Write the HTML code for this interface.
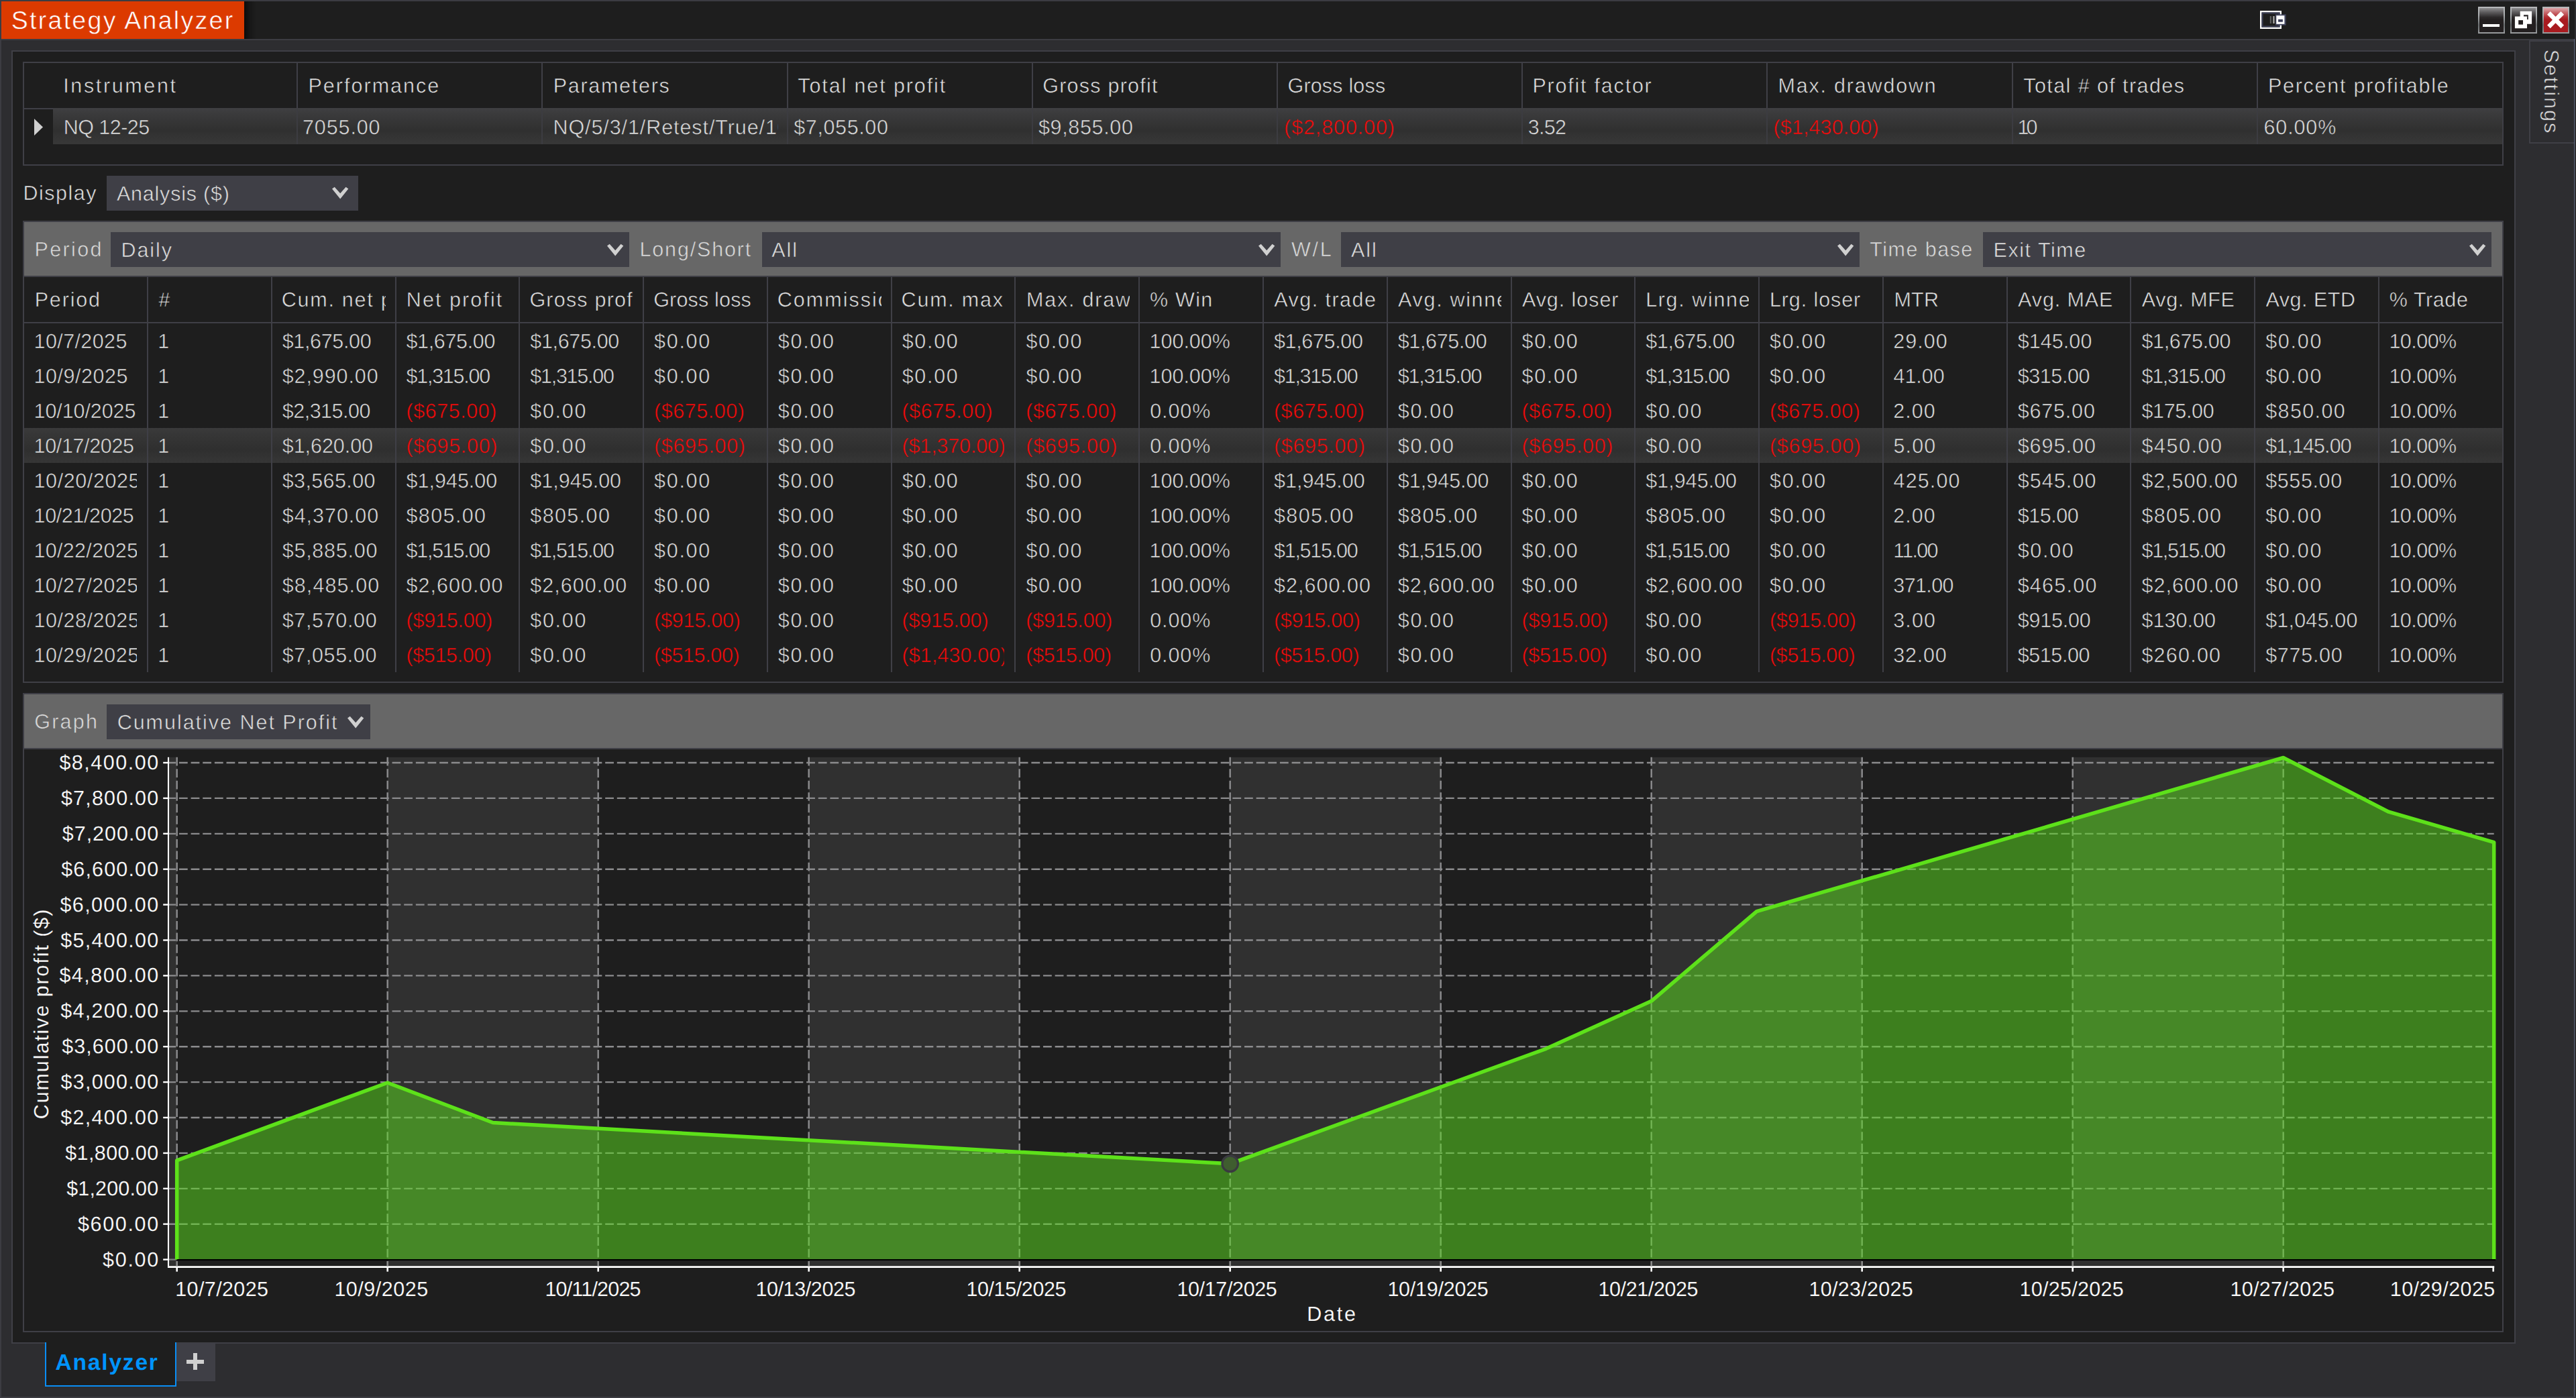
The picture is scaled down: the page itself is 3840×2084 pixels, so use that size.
<!DOCTYPE html>
<html><head><meta charset="utf-8"><title>Strategy Analyzer</title>
<style>
html,body{margin:0;padding:0;overflow:hidden;background:#2d2d30;}
body{width:3840px;height:2084px;overflow:hidden;background:#2d2d30;font-family:"Liberation Sans",sans-serif;position:relative;}
body div,body svg{position:absolute;}
.t{white-space:nowrap;text-rendering:geometricPrecision;}
</style></head><body>
<div style="left:0px;top:0px;width:3840px;height:2084px;background:#3c3c42;"></div>
<div style="left:2px;top:2px;width:3836px;height:56px;background:#1e1e1e;"></div>
<div style="left:2px;top:58px;width:3836px;height:2px;background:#3c3c42;"></div>
<div style="left:2px;top:60px;width:3836px;height:2022px;background:#2d2d30;"></div>
<div style="left:2px;top:2px;width:362px;height:56px;background:#dc3a00;"></div>
<div class="t" style="left:16.80px;top:12px;font-size:37.5px;line-height:37.5px;color:#ffffff;letter-spacing:2.276px;-webkit-text-stroke:0.55px #dc3a00;">Strategy Analyzer</div>
<div style="left:3694px;top:10px;width:40px;height:40px;background:linear-gradient(#b6b8ba 0%,#abaeb0 30%,#8f9395 50%,#6c7072 68%,#7f8284 85%,#9c9ea0 100%);"><div style="left:2px;top:2px;width:36px;height:36px;background:linear-gradient(#8d8d8f 0%,#5c5a5c 18%,#2c292a 38%,#231f20 48%,#231f20 100%);"></div></div>
<div style="left:3742px;top:10px;width:40px;height:40px;background:linear-gradient(#b6b8ba 0%,#abaeb0 30%,#8f9395 50%,#6c7072 68%,#7f8284 85%,#9c9ea0 100%);"><div style="left:2px;top:2px;width:36px;height:36px;background:linear-gradient(#8d8d8f 0%,#5c5a5c 18%,#2c292a 38%,#231f20 48%,#231f20 100%);"></div></div>
<div style="left:3790px;top:10px;width:40px;height:40px;background:linear-gradient(#b6b8ba 0%,#abaeb0 30%,#8f9395 50%,#6c7072 68%,#7f8284 85%,#9c9ea0 100%);"><div style="left:2px;top:2px;width:36px;height:36px;background:linear-gradient(#dca7aa 0%,#c9696d 18%,#b12c31 38%,#a91b20 48%,#a91b20 100%);"></div></div>
<div style="left:3701px;top:36px;width:25px;height:4.2px;background:#ffffff;"></div>
<svg style="left:3742px;top:10px" width="40" height="40" viewBox="0 0 40 40"><path d="M14.7,6.8 H32.1 V25.7 H14.7 Z M20,12 V19 H26.8 V12 Z" fill="#fff" fill-rule="evenodd"/><path d="M6.9,14.5 H25 V32.2 H6.9 Z" fill="#fff"/><rect x="12.2" y="20.1" width="6.8" height="6.5" fill="#231f20"/></svg>
<svg style="left:3790px;top:10px" width="40" height="40" viewBox="0 0 40 40"><path d="M9.4,9.4 L29.8,29.8 M29.8,9.4 L9.4,29.8" stroke="#fff" stroke-width="6.6" fill="none"/></svg>
<svg style="left:3350px;top:5px" width="80" height="50" viewBox="0 0 80 50"><rect x="20.2" y="12.2" width="29.6" height="24.6" fill="#1e1e1e" stroke="#fff" stroke-width="2.4"/><rect x="22.5" y="14.5" width="25" height="20" fill="none" stroke="#3d4058" stroke-width="2"/><rect x="33.8" y="19" width="2.2" height="11" fill="#5c5e5e"/><rect x="38.3" y="19" width="2.3" height="11" fill="#a8a8a8"/><rect x="42" y="16.4" width="15.6" height="16.2" fill="#454862"/><rect x="43.3" y="18.2" width="12.1" height="12.6" fill="#fff"/><rect x="46.1" y="23.8" width="6.8" height="3.9" fill="#3a3d58"/></svg>
<div style="left:364px;top:2px;width:18px;height:56px;background:linear-gradient(90deg,rgba(0,0,0,0.62),rgba(0,0,0,0.25) 45%,rgba(0,0,0,0));"></div>
<div style="left:3770px;top:60px;width:68px;height:154px;background:#3f3f46;"></div>
<div style="left:3772px;top:62px;width:66px;height:150px;background:#2d2d30;"></div>
<div class="t" style="left:3772px;top:62px;width:66px;height:150px;"><div class="t" style="left:30.7px;top:75.3px;transform:translate(-50%,-50%) rotate(90deg);font-size:30.6px;line-height:30.6px;color:#dcdcdc;letter-spacing:2.05px;-webkit-text-stroke:0.55px #2d2d30;">Settings</div></div>
<div style="left:17px;top:75px;width:3733px;height:1928px;background:#3f3f46;"></div>
<div style="left:19px;top:77px;width:3729px;height:1924px;background:#1e1e1e;"></div>
<div style="left:34px;top:92px;width:3698px;height:155px;background:#3f3f46;"></div>
<div style="left:36px;top:94px;width:3694px;height:151px;background:#1e1e1e;"></div>
<div style="left:36px;top:161px;width:3694px;height:2px;background:#3f3f46;"></div>
<div style="left:79px;top:161px;width:3651px;height:54px;background:linear-gradient(#3f3f42 0%,#3a3a3b 18%,#303030 62%,#383838 100%);"></div>
<div style="left:442px;top:94px;width:2px;height:68px;background:#3f3f46;"></div>
<div style="left:442px;top:163px;width:2px;height:52px;background:#3c3c41;"></div>
<div style="left:807px;top:94px;width:2px;height:68px;background:#3f3f46;"></div>
<div style="left:807px;top:163px;width:2px;height:52px;background:#3c3c41;"></div>
<div style="left:1173px;top:94px;width:2px;height:68px;background:#3f3f46;"></div>
<div style="left:1173px;top:163px;width:2px;height:52px;background:#3c3c41;"></div>
<div style="left:1538px;top:94px;width:2px;height:68px;background:#3f3f46;"></div>
<div style="left:1538px;top:163px;width:2px;height:52px;background:#3c3c41;"></div>
<div style="left:1903px;top:94px;width:2px;height:68px;background:#3f3f46;"></div>
<div style="left:1903px;top:163px;width:2px;height:52px;background:#3c3c41;"></div>
<div style="left:2268px;top:94px;width:2px;height:68px;background:#3f3f46;"></div>
<div style="left:2268px;top:163px;width:2px;height:52px;background:#3c3c41;"></div>
<div style="left:2633px;top:94px;width:2px;height:68px;background:#3f3f46;"></div>
<div style="left:2633px;top:163px;width:2px;height:52px;background:#3c3c41;"></div>
<div style="left:2999px;top:94px;width:2px;height:68px;background:#3f3f46;"></div>
<div style="left:2999px;top:163px;width:2px;height:52px;background:#3c3c41;"></div>
<div style="left:3364px;top:94px;width:2px;height:68px;background:#3f3f46;"></div>
<div style="left:3364px;top:163px;width:2px;height:52px;background:#3c3c41;"></div>
<svg style="left:50px;top:176px" width="16" height="28" viewBox="0 0 16 28"><path d="M1,1 L14,13.5 L1,26 Z" fill="#d0d0d0"/></svg>
<div class="t" style="left:94.19px;top:113px;font-size:30.5px;line-height:30.5px;color:#dedede;letter-spacing:2.640px;-webkit-text-stroke:0.55px #1e1e1e;">Instrument</div>
<div class="t" style="left:459.50px;top:113px;font-size:30.5px;line-height:30.5px;color:#dedede;letter-spacing:2.014px;-webkit-text-stroke:0.55px #1e1e1e;">Performance</div>
<div class="t" style="left:824.70px;top:113px;font-size:30.5px;line-height:30.5px;color:#dedede;letter-spacing:1.716px;-webkit-text-stroke:0.55px #1e1e1e;">Parameters</div>
<div class="t" style="left:1189.31px;top:113px;font-size:30.5px;line-height:30.5px;color:#dedede;letter-spacing:1.886px;-webkit-text-stroke:0.55px #1e1e1e;">Total net profit</div>
<div class="t" style="left:1554.27px;top:113px;font-size:30.5px;line-height:30.5px;color:#dedede;letter-spacing:1.226px;-webkit-text-stroke:0.55px #1e1e1e;">Gross profit</div>
<div class="t" style="left:1919.47px;top:113px;font-size:30.5px;line-height:30.5px;color:#dedede;letter-spacing:0.184px;-webkit-text-stroke:0.55px #1e1e1e;">Gross loss</div>
<div class="t" style="left:2284.50px;top:113px;font-size:30.5px;line-height:30.5px;color:#dedede;letter-spacing:1.778px;-webkit-text-stroke:0.55px #1e1e1e;">Profit factor</div>
<div class="t" style="left:2650.50px;top:113px;font-size:30.5px;line-height:30.5px;color:#dedede;letter-spacing:1.806px;-webkit-text-stroke:0.55px #1e1e1e;">Max. drawdown</div>
<div class="t" style="left:3016.31px;top:113px;font-size:30.5px;line-height:30.5px;color:#dedede;letter-spacing:1.415px;-webkit-text-stroke:0.55px #1e1e1e;">Total # of trades</div>
<div class="t" style="left:3380.90px;top:113px;font-size:30.5px;line-height:30.5px;color:#dedede;letter-spacing:1.745px;-webkit-text-stroke:0.55px #1e1e1e;">Percent profitable</div>
<div class="t" style="left:94.80px;top:175px;font-size:30.5px;line-height:30.5px;color:#dcdcdc;letter-spacing:-0.557px;-webkit-text-stroke:0.55px #363637;">NQ 12-25</div>
<div class="t" style="left:450.94px;top:175px;font-size:30.5px;line-height:30.5px;color:#dcdcdc;letter-spacing:0.897px;-webkit-text-stroke:0.55px #363637;">7055.00</div>
<div class="t" style="left:824.50px;top:175px;font-size:30.5px;line-height:30.5px;color:#dcdcdc;letter-spacing:0.914px;-webkit-text-stroke:0.55px #363637;width:335.10px;overflow:hidden;">NQ/5/3/1/Retest/True/10</div>
<div class="t" style="left:1183.27px;top:175px;font-size:30.5px;line-height:30.5px;color:#dcdcdc;letter-spacing:0.621px;-webkit-text-stroke:0.55px #363637;">$7,055.00</div>
<div class="t" style="left:1547.97px;top:175px;font-size:30.5px;line-height:30.5px;color:#dcdcdc;letter-spacing:0.661px;-webkit-text-stroke:0.55px #363637;">$9,855.00</div>
<div class="t" style="left:1914.11px;top:175px;font-size:30.5px;line-height:30.5px;color:#f40a0a;letter-spacing:0.882px;-webkit-text-stroke:0.55px #363637;">($2,800.00)</div>
<div class="t" style="left:2277.64px;top:175px;font-size:30.5px;line-height:30.5px;color:#dcdcdc;letter-spacing:-0.692px;-webkit-text-stroke:0.55px #363637;">3.52</div>
<div class="t" style="left:2643.61px;top:175px;font-size:30.5px;line-height:30.5px;color:#f40a0a;letter-spacing:0.096px;-webkit-text-stroke:0.55px #363637;">($1,430.00)</div>
<div class="t" style="left:3007.38px;top:175px;font-size:30.5px;line-height:30.5px;color:#dcdcdc;letter-spacing:-3.877px;-webkit-text-stroke:0.55px #363637;">10</div>
<div class="t" style="left:3374.45px;top:175px;font-size:30.5px;line-height:30.5px;color:#dcdcdc;letter-spacing:0.882px;-webkit-text-stroke:0.55px #363637;">60.00%</div>
<div class="t" style="left:34.50px;top:273px;font-size:30.5px;line-height:30.5px;color:#dedede;letter-spacing:1.509px;-webkit-text-stroke:0.55px #1e1e1e;">Display</div>
<div style="left:159px;top:262px;width:375px;height:52px;background:#3f3f46;"></div>
<div class="t" style="left:173.94px;top:274px;font-size:30.5px;line-height:30.5px;color:#dedede;letter-spacing:0.784px;-webkit-text-stroke:0.55px #3f3f46;">Analysis ($)</div>
<svg style="left:494.8px;top:277.8px" width="25" height="19" viewBox="0 0 25 19"><polygon points="0,3.6 3.7,0.7 12.2,10.2 20.6,0.7 24.3,3.6 12.2,18.4" fill="#d0d0d0"/></svg>
<div style="left:34px;top:329px;width:3698px;height:84px;background:#3f3f46;"></div>
<div style="left:36px;top:331px;width:3694px;height:80px;background:#676767;"></div>
<div class="t" style="left:51.50px;top:357px;font-size:30.5px;line-height:30.5px;color:#dadada;letter-spacing:2.380px;-webkit-text-stroke:0.55px #676767;">Period</div>
<div style="left:165px;top:346px;width:773px;height:52px;background:#3f3f46;"></div>
<svg style="left:905px;top:363px" width="25" height="19" viewBox="0 0 25 19"><polygon points="0,3.6 3.7,0.7 12.2,10.2 20.6,0.7 24.3,3.6 12.2,18.4" fill="#d0d0d0"/></svg>
<div class="t" style="left:180.50px;top:358px;font-size:30.5px;line-height:30.5px;color:#dedede;letter-spacing:1.917px;-webkit-text-stroke:0.55px #3f3f46;">Daily</div>
<div class="t" style="left:953.50px;top:357px;font-size:30.5px;line-height:30.5px;color:#dadada;letter-spacing:1.833px;-webkit-text-stroke:0.55px #676767;">Long/Short</div>
<div style="left:1136px;top:346px;width:773px;height:52px;background:#3f3f46;"></div>
<svg style="left:1876px;top:363px" width="25" height="19" viewBox="0 0 25 19"><polygon points="0,3.6 3.7,0.7 12.2,10.2 20.6,0.7 24.3,3.6 12.2,18.4" fill="#d0d0d0"/></svg>
<div class="t" style="left:1150.24px;top:358px;font-size:30.5px;line-height:30.5px;color:#dedede;letter-spacing:2.003px;-webkit-text-stroke:0.55px #3f3f46;">All</div>
<div class="t" style="left:1925.07px;top:357px;font-size:30.5px;line-height:30.5px;color:#dadada;letter-spacing:2.662px;-webkit-text-stroke:0.55px #676767;">W/L</div>
<div style="left:1999px;top:346px;width:773px;height:52px;background:#3f3f46;"></div>
<svg style="left:2739px;top:363px" width="25" height="19" viewBox="0 0 25 19"><polygon points="0,3.6 3.7,0.7 12.2,10.2 20.6,0.7 24.3,3.6 12.2,18.4" fill="#d0d0d0"/></svg>
<div class="t" style="left:2013.94px;top:358px;font-size:30.5px;line-height:30.5px;color:#dedede;letter-spacing:2.003px;-webkit-text-stroke:0.55px #3f3f46;">All</div>
<div class="t" style="left:2787.31px;top:357px;font-size:30.5px;line-height:30.5px;color:#dadada;letter-spacing:1.473px;-webkit-text-stroke:0.55px #676767;">Time base</div>
<div style="left:2956px;top:346px;width:758px;height:52px;background:#3f3f46;"></div>
<svg style="left:3681px;top:363px" width="25" height="19" viewBox="0 0 25 19"><polygon points="0,3.6 3.7,0.7 12.2,10.2 20.6,0.7 24.3,3.6 12.2,18.4" fill="#d0d0d0"/></svg>
<div class="t" style="left:2971.50px;top:358px;font-size:30.5px;line-height:30.5px;color:#dedede;letter-spacing:1.540px;-webkit-text-stroke:0.55px #3f3f46;">Exit Time</div>
<div style="left:34px;top:411px;width:3698px;height:607px;background:#3f3f46;"></div>
<div style="left:36px;top:413px;width:3694px;height:603px;background:#1e1e1e;"></div>
<div style="left:36px;top:480px;width:3694px;height:2px;background:#3f3f46;"></div>
<div style="left:36px;top:638.0px;width:3694px;height:52.0px;background:linear-gradient(#3a3a3b 0%,#363636 20%,#2f2f2f 62%,#363636 100%);"></div>
<div style="left:219px;top:413px;width:2px;height:589px;background:#3f3f46;"></div>
<div style="left:404px;top:413px;width:2px;height:589px;background:#3f3f46;"></div>
<div style="left:589px;top:413px;width:2px;height:589px;background:#3f3f46;"></div>
<div style="left:773px;top:413px;width:2px;height:589px;background:#3f3f46;"></div>
<div style="left:958px;top:413px;width:2px;height:589px;background:#3f3f46;"></div>
<div style="left:1143px;top:413px;width:2px;height:589px;background:#3f3f46;"></div>
<div style="left:1328px;top:413px;width:2px;height:589px;background:#3f3f46;"></div>
<div style="left:1512px;top:413px;width:2px;height:589px;background:#3f3f46;"></div>
<div style="left:1697px;top:413px;width:2px;height:589px;background:#3f3f46;"></div>
<div style="left:1882px;top:413px;width:2px;height:589px;background:#3f3f46;"></div>
<div style="left:2067px;top:413px;width:2px;height:589px;background:#3f3f46;"></div>
<div style="left:2252px;top:413px;width:2px;height:589px;background:#3f3f46;"></div>
<div style="left:2436px;top:413px;width:2px;height:589px;background:#3f3f46;"></div>
<div style="left:2621px;top:413px;width:2px;height:589px;background:#3f3f46;"></div>
<div style="left:2806px;top:413px;width:2px;height:589px;background:#3f3f46;"></div>
<div style="left:2991px;top:413px;width:2px;height:589px;background:#3f3f46;"></div>
<div style="left:3175px;top:413px;width:2px;height:589px;background:#3f3f46;"></div>
<div style="left:3360px;top:413px;width:2px;height:589px;background:#3f3f46;"></div>
<div style="left:3545px;top:413px;width:2px;height:589px;background:#3f3f46;"></div>
<div class="t" style="left:51.70px;top:432px;font-size:30.5px;line-height:30.5px;color:#dedede;letter-spacing:1.829px;-webkit-text-stroke:0.55px #1e1e1e;width:153.58px;overflow:hidden;">Period</div>
<div class="t" style="left:236.45px;top:432px;font-size:30.5px;line-height:30.5px;color:#dedede;letter-spacing:0.000px;-webkit-text-stroke:0.55px #1e1e1e;width:153.61px;overflow:hidden;">#</div>
<div class="t" style="left:419.71px;top:432px;font-size:30.5px;line-height:30.5px;color:#dedede;letter-spacing:1.760px;-webkit-text-stroke:0.55px #1e1e1e;width:155.13px;overflow:hidden;">Cum. net profit</div>
<div class="t" style="left:605.84px;top:432px;font-size:30.5px;line-height:30.5px;color:#dedede;letter-spacing:2.070px;-webkit-text-stroke:0.55px #1e1e1e;width:153.78px;overflow:hidden;">Net profit</div>
<div class="t" style="left:789.39px;top:432px;font-size:30.5px;line-height:30.5px;color:#dedede;letter-spacing:1.226px;-webkit-text-stroke:0.55px #1e1e1e;width:155.01px;overflow:hidden;">Gross profit</div>
<div class="t" style="left:974.17px;top:432px;font-size:30.5px;line-height:30.5px;color:#dedede;letter-spacing:0.184px;-webkit-text-stroke:0.55px #1e1e1e;width:155.01px;overflow:hidden;">Gross loss</div>
<div class="t" style="left:1158.83px;top:432px;font-size:30.5px;line-height:30.5px;color:#dedede;letter-spacing:2.007px;-webkit-text-stroke:0.55px #1e1e1e;width:155.13px;overflow:hidden;">Commission</div>
<div class="t" style="left:1343.61px;top:432px;font-size:30.5px;line-height:30.5px;color:#dedede;letter-spacing:1.766px;-webkit-text-stroke:0.55px #1e1e1e;width:155.13px;overflow:hidden;">Cum. max. drawdown</div>
<div class="t" style="left:1529.94px;top:432px;font-size:30.5px;line-height:30.5px;color:#dedede;letter-spacing:1.806px;-webkit-text-stroke:0.55px #1e1e1e;width:153.58px;overflow:hidden;">Max. drawdown</div>
<div class="t" style="left:1713.93px;top:432px;font-size:30.5px;line-height:30.5px;color:#dedede;letter-spacing:1.302px;-webkit-text-stroke:0.55px #1e1e1e;width:154.37px;overflow:hidden;">% Win</div>
<div class="t" style="left:1899.34px;top:432px;font-size:30.5px;line-height:30.5px;color:#dedede;letter-spacing:1.450px;-webkit-text-stroke:0.55px #1e1e1e;width:153.74px;overflow:hidden;">Avg. trade</div>
<div class="t" style="left:2084.12px;top:432px;font-size:30.5px;line-height:30.5px;color:#dedede;letter-spacing:1.678px;-webkit-text-stroke:0.55px #1e1e1e;width:153.74px;overflow:hidden;">Avg. winner</div>
<div class="t" style="left:2268.90px;top:432px;font-size:30.5px;line-height:30.5px;color:#dedede;letter-spacing:0.946px;-webkit-text-stroke:0.55px #1e1e1e;width:153.74px;overflow:hidden;">Avg. loser</div>
<div class="t" style="left:2453.14px;top:432px;font-size:30.5px;line-height:30.5px;color:#dedede;letter-spacing:1.644px;-webkit-text-stroke:0.55px #1e1e1e;width:154.28px;overflow:hidden;">Lrg. winner</div>
<div class="t" style="left:2637.92px;top:432px;font-size:30.5px;line-height:30.5px;color:#dedede;letter-spacing:0.907px;-webkit-text-stroke:0.55px #1e1e1e;width:154.28px;overflow:hidden;">Lrg. loser</div>
<div class="t" style="left:2823.40px;top:432px;font-size:30.5px;line-height:30.5px;color:#dedede;letter-spacing:0.288px;-webkit-text-stroke:0.55px #1e1e1e;width:153.58px;overflow:hidden;">MTR</div>
<div class="t" style="left:3008.02px;top:432px;font-size:30.5px;line-height:30.5px;color:#dedede;letter-spacing:0.912px;-webkit-text-stroke:0.55px #1e1e1e;width:153.74px;overflow:hidden;">Avg. MAE</div>
<div class="t" style="left:3192.80px;top:432px;font-size:30.5px;line-height:30.5px;color:#dedede;letter-spacing:0.689px;-webkit-text-stroke:0.55px #1e1e1e;width:153.74px;overflow:hidden;">Avg. MFE</div>
<div class="t" style="left:3377.58px;top:432px;font-size:30.5px;line-height:30.5px;color:#dedede;letter-spacing:0.484px;-webkit-text-stroke:0.55px #1e1e1e;width:153.74px;overflow:hidden;">Avg. ETD</div>
<div class="t" style="left:3561.73px;top:432px;font-size:30.5px;line-height:30.5px;color:#dedede;letter-spacing:0.590px;-webkit-text-stroke:0.55px #1e1e1e;width:154.37px;overflow:hidden;">% Trade</div>
<div class="t" style="left:50.58px;top:494px;font-size:30.5px;line-height:30.5px;color:#dcdcdc;letter-spacing:0.385px;-webkit-text-stroke:0.55px #1e1e1e;width:153.40px;overflow:hidden;">10/7/2025</div>
<div class="t" style="left:235.36px;top:494px;font-size:30.5px;line-height:30.5px;color:#dcdcdc;letter-spacing:0.000px;-webkit-text-stroke:0.55px #1e1e1e;width:153.40px;overflow:hidden;">1</div>
<div class="t" style="left:420.73px;top:494px;font-size:30.5px;line-height:30.5px;color:#dcdcdc;letter-spacing:-0.344px;-webkit-text-stroke:0.55px #1e1e1e;width:152.81px;overflow:hidden;">$1,675.00</div>
<div class="t" style="left:605.51px;top:494px;font-size:30.5px;line-height:30.5px;color:#dcdcdc;letter-spacing:-0.344px;-webkit-text-stroke:0.55px #1e1e1e;width:152.81px;overflow:hidden;">$1,675.00</div>
<div class="t" style="left:790.29px;top:494px;font-size:30.5px;line-height:30.5px;color:#dcdcdc;letter-spacing:-0.344px;-webkit-text-stroke:0.55px #1e1e1e;width:152.81px;overflow:hidden;">$1,675.00</div>
<div class="t" style="left:975.07px;top:494px;font-size:30.5px;line-height:30.5px;color:#dcdcdc;letter-spacing:1.705px;-webkit-text-stroke:0.55px #1e1e1e;width:152.81px;overflow:hidden;">$0.00</div>
<div class="t" style="left:1159.85px;top:494px;font-size:30.5px;line-height:30.5px;color:#dcdcdc;letter-spacing:1.705px;-webkit-text-stroke:0.55px #1e1e1e;width:152.81px;overflow:hidden;">$0.00</div>
<div class="t" style="left:1344.63px;top:494px;font-size:30.5px;line-height:30.5px;color:#dcdcdc;letter-spacing:1.705px;-webkit-text-stroke:0.55px #1e1e1e;width:152.81px;overflow:hidden;">$0.00</div>
<div class="t" style="left:1529.41px;top:494px;font-size:30.5px;line-height:30.5px;color:#dcdcdc;letter-spacing:1.705px;-webkit-text-stroke:0.55px #1e1e1e;width:152.81px;overflow:hidden;">$0.00</div>
<div class="t" style="left:1713.60px;top:494px;font-size:30.5px;line-height:30.5px;color:#dcdcdc;letter-spacing:-0.035px;-webkit-text-stroke:0.55px #1e1e1e;width:153.40px;overflow:hidden;">100.00%</div>
<div class="t" style="left:1898.97px;top:494px;font-size:30.5px;line-height:30.5px;color:#dcdcdc;letter-spacing:-0.344px;-webkit-text-stroke:0.55px #1e1e1e;width:152.81px;overflow:hidden;">$1,675.00</div>
<div class="t" style="left:2083.75px;top:494px;font-size:30.5px;line-height:30.5px;color:#dcdcdc;letter-spacing:-0.344px;-webkit-text-stroke:0.55px #1e1e1e;width:152.81px;overflow:hidden;">$1,675.00</div>
<div class="t" style="left:2268.53px;top:494px;font-size:30.5px;line-height:30.5px;color:#dcdcdc;letter-spacing:1.705px;-webkit-text-stroke:0.55px #1e1e1e;width:152.81px;overflow:hidden;">$0.00</div>
<div class="t" style="left:2453.31px;top:494px;font-size:30.5px;line-height:30.5px;color:#dcdcdc;letter-spacing:-0.344px;-webkit-text-stroke:0.55px #1e1e1e;width:152.81px;overflow:hidden;">$1,675.00</div>
<div class="t" style="left:2638.09px;top:494px;font-size:30.5px;line-height:30.5px;color:#dcdcdc;letter-spacing:1.705px;-webkit-text-stroke:0.55px #1e1e1e;width:152.81px;overflow:hidden;">$0.00</div>
<div class="t" style="left:2822.17px;top:494px;font-size:30.5px;line-height:30.5px;color:#dcdcdc;letter-spacing:1.059px;-webkit-text-stroke:0.55px #1e1e1e;width:153.51px;overflow:hidden;">29.00</div>
<div class="t" style="left:3007.65px;top:494px;font-size:30.5px;line-height:30.5px;color:#dcdcdc;letter-spacing:0.079px;-webkit-text-stroke:0.55px #1e1e1e;width:152.81px;overflow:hidden;">$145.00</div>
<div class="t" style="left:3192.43px;top:494px;font-size:30.5px;line-height:30.5px;color:#dcdcdc;letter-spacing:-0.344px;-webkit-text-stroke:0.55px #1e1e1e;width:152.81px;overflow:hidden;">$1,675.00</div>
<div class="t" style="left:3377.21px;top:494px;font-size:30.5px;line-height:30.5px;color:#dcdcdc;letter-spacing:1.705px;-webkit-text-stroke:0.55px #1e1e1e;width:152.81px;overflow:hidden;">$0.00</div>
<div class="t" style="left:3561.40px;top:494px;font-size:30.5px;line-height:30.5px;color:#dcdcdc;letter-spacing:-0.524px;-webkit-text-stroke:0.55px #1e1e1e;width:153.40px;overflow:hidden;">10.00%</div>
<div class="t" style="left:50.58px;top:546px;font-size:30.5px;line-height:30.5px;color:#dcdcdc;letter-spacing:0.510px;-webkit-text-stroke:0.55px #1e1e1e;width:153.40px;overflow:hidden;">10/9/2025</div>
<div class="t" style="left:235.36px;top:546px;font-size:30.5px;line-height:30.5px;color:#dcdcdc;letter-spacing:0.000px;-webkit-text-stroke:0.55px #1e1e1e;width:153.40px;overflow:hidden;">1</div>
<div class="t" style="left:420.73px;top:546px;font-size:30.5px;line-height:30.5px;color:#dcdcdc;letter-spacing:0.908px;-webkit-text-stroke:0.55px #1e1e1e;width:152.81px;overflow:hidden;">$2,990.00</div>
<div class="t" style="left:605.51px;top:546px;font-size:30.5px;line-height:30.5px;color:#dcdcdc;letter-spacing:-1.255px;-webkit-text-stroke:0.55px #1e1e1e;width:152.81px;overflow:hidden;">$1,315.00</div>
<div class="t" style="left:790.29px;top:546px;font-size:30.5px;line-height:30.5px;color:#dcdcdc;letter-spacing:-1.255px;-webkit-text-stroke:0.55px #1e1e1e;width:152.81px;overflow:hidden;">$1,315.00</div>
<div class="t" style="left:975.07px;top:546px;font-size:30.5px;line-height:30.5px;color:#dcdcdc;letter-spacing:1.705px;-webkit-text-stroke:0.55px #1e1e1e;width:152.81px;overflow:hidden;">$0.00</div>
<div class="t" style="left:1159.85px;top:546px;font-size:30.5px;line-height:30.5px;color:#dcdcdc;letter-spacing:1.705px;-webkit-text-stroke:0.55px #1e1e1e;width:152.81px;overflow:hidden;">$0.00</div>
<div class="t" style="left:1344.63px;top:546px;font-size:30.5px;line-height:30.5px;color:#dcdcdc;letter-spacing:1.705px;-webkit-text-stroke:0.55px #1e1e1e;width:152.81px;overflow:hidden;">$0.00</div>
<div class="t" style="left:1529.41px;top:546px;font-size:30.5px;line-height:30.5px;color:#dcdcdc;letter-spacing:1.705px;-webkit-text-stroke:0.55px #1e1e1e;width:152.81px;overflow:hidden;">$0.00</div>
<div class="t" style="left:1713.60px;top:546px;font-size:30.5px;line-height:30.5px;color:#dcdcdc;letter-spacing:-0.035px;-webkit-text-stroke:0.55px #1e1e1e;width:153.40px;overflow:hidden;">100.00%</div>
<div class="t" style="left:1898.97px;top:546px;font-size:30.5px;line-height:30.5px;color:#dcdcdc;letter-spacing:-1.255px;-webkit-text-stroke:0.55px #1e1e1e;width:152.81px;overflow:hidden;">$1,315.00</div>
<div class="t" style="left:2083.75px;top:546px;font-size:30.5px;line-height:30.5px;color:#dcdcdc;letter-spacing:-1.255px;-webkit-text-stroke:0.55px #1e1e1e;width:152.81px;overflow:hidden;">$1,315.00</div>
<div class="t" style="left:2268.53px;top:546px;font-size:30.5px;line-height:30.5px;color:#dcdcdc;letter-spacing:1.705px;-webkit-text-stroke:0.55px #1e1e1e;width:152.81px;overflow:hidden;">$0.00</div>
<div class="t" style="left:2453.31px;top:546px;font-size:30.5px;line-height:30.5px;color:#dcdcdc;letter-spacing:-1.255px;-webkit-text-stroke:0.55px #1e1e1e;width:152.81px;overflow:hidden;">$1,315.00</div>
<div class="t" style="left:2638.09px;top:546px;font-size:30.5px;line-height:30.5px;color:#dcdcdc;letter-spacing:1.705px;-webkit-text-stroke:0.55px #1e1e1e;width:152.81px;overflow:hidden;">$0.00</div>
<div class="t" style="left:2822.60px;top:546px;font-size:30.5px;line-height:30.5px;color:#dcdcdc;letter-spacing:-0.075px;-webkit-text-stroke:0.55px #1e1e1e;width:153.08px;overflow:hidden;">41.00</div>
<div class="t" style="left:3007.65px;top:546px;font-size:30.5px;line-height:30.5px;color:#dcdcdc;letter-spacing:-0.390px;-webkit-text-stroke:0.55px #1e1e1e;width:152.81px;overflow:hidden;">$315.00</div>
<div class="t" style="left:3192.43px;top:546px;font-size:30.5px;line-height:30.5px;color:#dcdcdc;letter-spacing:-1.255px;-webkit-text-stroke:0.55px #1e1e1e;width:152.81px;overflow:hidden;">$1,315.00</div>
<div class="t" style="left:3377.21px;top:546px;font-size:30.5px;line-height:30.5px;color:#dcdcdc;letter-spacing:1.705px;-webkit-text-stroke:0.55px #1e1e1e;width:152.81px;overflow:hidden;">$0.00</div>
<div class="t" style="left:3561.40px;top:546px;font-size:30.5px;line-height:30.5px;color:#dcdcdc;letter-spacing:-0.524px;-webkit-text-stroke:0.55px #1e1e1e;width:153.40px;overflow:hidden;">10.00%</div>
<div class="t" style="left:50.58px;top:598px;font-size:30.5px;line-height:30.5px;color:#dcdcdc;letter-spacing:-0.092px;-webkit-text-stroke:0.55px #1e1e1e;width:153.40px;overflow:hidden;">10/10/2025</div>
<div class="t" style="left:235.36px;top:598px;font-size:30.5px;line-height:30.5px;color:#dcdcdc;letter-spacing:0.000px;-webkit-text-stroke:0.55px #1e1e1e;width:153.40px;overflow:hidden;">1</div>
<div class="t" style="left:420.73px;top:598px;font-size:30.5px;line-height:30.5px;color:#dcdcdc;letter-spacing:-0.494px;-webkit-text-stroke:0.55px #1e1e1e;width:152.81px;overflow:hidden;">$2,315.00</div>
<div class="t" style="left:605.45px;top:598px;font-size:30.5px;line-height:30.5px;color:#f40a0a;letter-spacing:0.555px;-webkit-text-stroke:0.55px #1e1e1e;width:152.87px;overflow:hidden;">($675.00)</div>
<div class="t" style="left:790.29px;top:598px;font-size:30.5px;line-height:30.5px;color:#dcdcdc;letter-spacing:1.705px;-webkit-text-stroke:0.55px #1e1e1e;width:152.81px;overflow:hidden;">$0.00</div>
<div class="t" style="left:975.01px;top:598px;font-size:30.5px;line-height:30.5px;color:#f40a0a;letter-spacing:0.555px;-webkit-text-stroke:0.55px #1e1e1e;width:152.87px;overflow:hidden;">($675.00)</div>
<div class="t" style="left:1159.85px;top:598px;font-size:30.5px;line-height:30.5px;color:#dcdcdc;letter-spacing:1.705px;-webkit-text-stroke:0.55px #1e1e1e;width:152.81px;overflow:hidden;">$0.00</div>
<div class="t" style="left:1344.57px;top:598px;font-size:30.5px;line-height:30.5px;color:#f40a0a;letter-spacing:0.555px;-webkit-text-stroke:0.55px #1e1e1e;width:152.87px;overflow:hidden;">($675.00)</div>
<div class="t" style="left:1529.35px;top:598px;font-size:30.5px;line-height:30.5px;color:#f40a0a;letter-spacing:0.555px;-webkit-text-stroke:0.55px #1e1e1e;width:152.87px;overflow:hidden;">($675.00)</div>
<div class="t" style="left:1714.23px;top:598px;font-size:30.5px;line-height:30.5px;color:#dcdcdc;letter-spacing:0.916px;-webkit-text-stroke:0.55px #1e1e1e;width:152.77px;overflow:hidden;">0.00%</div>
<div class="t" style="left:1898.91px;top:598px;font-size:30.5px;line-height:30.5px;color:#f40a0a;letter-spacing:0.555px;-webkit-text-stroke:0.55px #1e1e1e;width:152.87px;overflow:hidden;">($675.00)</div>
<div class="t" style="left:2083.75px;top:598px;font-size:30.5px;line-height:30.5px;color:#dcdcdc;letter-spacing:1.705px;-webkit-text-stroke:0.55px #1e1e1e;width:152.81px;overflow:hidden;">$0.00</div>
<div class="t" style="left:2268.47px;top:598px;font-size:30.5px;line-height:30.5px;color:#f40a0a;letter-spacing:0.555px;-webkit-text-stroke:0.55px #1e1e1e;width:152.87px;overflow:hidden;">($675.00)</div>
<div class="t" style="left:2453.31px;top:598px;font-size:30.5px;line-height:30.5px;color:#dcdcdc;letter-spacing:1.705px;-webkit-text-stroke:0.55px #1e1e1e;width:152.81px;overflow:hidden;">$0.00</div>
<div class="t" style="left:2638.03px;top:598px;font-size:30.5px;line-height:30.5px;color:#f40a0a;letter-spacing:0.555px;-webkit-text-stroke:0.55px #1e1e1e;width:152.87px;overflow:hidden;">($675.00)</div>
<div class="t" style="left:2822.17px;top:598px;font-size:30.5px;line-height:30.5px;color:#dcdcdc;letter-spacing:1.068px;-webkit-text-stroke:0.55px #1e1e1e;width:153.51px;overflow:hidden;">2.00</div>
<div class="t" style="left:3007.65px;top:598px;font-size:30.5px;line-height:30.5px;color:#dcdcdc;letter-spacing:0.825px;-webkit-text-stroke:0.55px #1e1e1e;width:152.81px;overflow:hidden;">$675.00</div>
<div class="t" style="left:3192.43px;top:598px;font-size:30.5px;line-height:30.5px;color:#dcdcdc;letter-spacing:-0.347px;-webkit-text-stroke:0.55px #1e1e1e;width:152.81px;overflow:hidden;">$175.00</div>
<div class="t" style="left:3377.21px;top:598px;font-size:30.5px;line-height:30.5px;color:#dcdcdc;letter-spacing:1.385px;-webkit-text-stroke:0.55px #1e1e1e;width:152.81px;overflow:hidden;">$850.00</div>
<div class="t" style="left:3561.40px;top:598px;font-size:30.5px;line-height:30.5px;color:#dcdcdc;letter-spacing:-0.524px;-webkit-text-stroke:0.55px #1e1e1e;width:153.40px;overflow:hidden;">10.00%</div>
<div class="t" style="left:50.58px;top:650px;font-size:30.5px;line-height:30.5px;color:#dcdcdc;letter-spacing:-0.357px;-webkit-text-stroke:0.55px #333333;width:153.40px;overflow:hidden;">10/17/2025</div>
<div class="t" style="left:235.36px;top:650px;font-size:30.5px;line-height:30.5px;color:#dcdcdc;letter-spacing:0.000px;-webkit-text-stroke:0.55px #333333;width:153.40px;overflow:hidden;">1</div>
<div class="t" style="left:420.73px;top:650px;font-size:30.5px;line-height:30.5px;color:#dcdcdc;letter-spacing:-0.042px;-webkit-text-stroke:0.55px #333333;width:152.81px;overflow:hidden;">$1,620.00</div>
<div class="t" style="left:605.45px;top:650px;font-size:30.5px;line-height:30.5px;color:#f40a0a;letter-spacing:0.680px;-webkit-text-stroke:0.55px #333333;width:152.87px;overflow:hidden;">($695.00)</div>
<div class="t" style="left:790.29px;top:650px;font-size:30.5px;line-height:30.5px;color:#dcdcdc;letter-spacing:1.705px;-webkit-text-stroke:0.55px #333333;width:152.81px;overflow:hidden;">$0.00</div>
<div class="t" style="left:975.01px;top:650px;font-size:30.5px;line-height:30.5px;color:#f40a0a;letter-spacing:0.680px;-webkit-text-stroke:0.55px #333333;width:152.87px;overflow:hidden;">($695.00)</div>
<div class="t" style="left:1159.85px;top:650px;font-size:30.5px;line-height:30.5px;color:#dcdcdc;letter-spacing:1.705px;-webkit-text-stroke:0.55px #333333;width:152.81px;overflow:hidden;">$0.00</div>
<div class="t" style="left:1344.57px;top:650px;font-size:30.5px;line-height:30.5px;color:#f40a0a;letter-spacing:-0.160px;-webkit-text-stroke:0.55px #333333;width:152.87px;overflow:hidden;">($1,370.00)</div>
<div class="t" style="left:1529.35px;top:650px;font-size:30.5px;line-height:30.5px;color:#f40a0a;letter-spacing:0.680px;-webkit-text-stroke:0.55px #333333;width:152.87px;overflow:hidden;">($695.00)</div>
<div class="t" style="left:1714.23px;top:650px;font-size:30.5px;line-height:30.5px;color:#dcdcdc;letter-spacing:0.916px;-webkit-text-stroke:0.55px #333333;width:152.77px;overflow:hidden;">0.00%</div>
<div class="t" style="left:1898.91px;top:650px;font-size:30.5px;line-height:30.5px;color:#f40a0a;letter-spacing:0.680px;-webkit-text-stroke:0.55px #333333;width:152.87px;overflow:hidden;">($695.00)</div>
<div class="t" style="left:2083.75px;top:650px;font-size:30.5px;line-height:30.5px;color:#dcdcdc;letter-spacing:1.705px;-webkit-text-stroke:0.55px #333333;width:152.81px;overflow:hidden;">$0.00</div>
<div class="t" style="left:2268.47px;top:650px;font-size:30.5px;line-height:30.5px;color:#f40a0a;letter-spacing:0.680px;-webkit-text-stroke:0.55px #333333;width:152.87px;overflow:hidden;">($695.00)</div>
<div class="t" style="left:2453.31px;top:650px;font-size:30.5px;line-height:30.5px;color:#dcdcdc;letter-spacing:1.705px;-webkit-text-stroke:0.55px #333333;width:152.81px;overflow:hidden;">$0.00</div>
<div class="t" style="left:2638.03px;top:650px;font-size:30.5px;line-height:30.5px;color:#f40a0a;letter-spacing:0.680px;-webkit-text-stroke:0.55px #333333;width:152.87px;overflow:hidden;">($695.00)</div>
<div class="t" style="left:2822.58px;top:650px;font-size:30.5px;line-height:30.5px;color:#dcdcdc;letter-spacing:1.058px;-webkit-text-stroke:0.55px #333333;width:153.10px;overflow:hidden;">5.00</div>
<div class="t" style="left:3007.65px;top:650px;font-size:30.5px;line-height:30.5px;color:#dcdcdc;letter-spacing:0.993px;-webkit-text-stroke:0.55px #333333;width:152.81px;overflow:hidden;">$695.00</div>
<div class="t" style="left:3192.43px;top:650px;font-size:30.5px;line-height:30.5px;color:#dcdcdc;letter-spacing:1.528px;-webkit-text-stroke:0.55px #333333;width:152.81px;overflow:hidden;">$450.00</div>
<div class="t" style="left:3377.21px;top:650px;font-size:30.5px;line-height:30.5px;color:#dcdcdc;letter-spacing:-0.903px;-webkit-text-stroke:0.55px #333333;width:152.81px;overflow:hidden;">$1,145.00</div>
<div class="t" style="left:3561.40px;top:650px;font-size:30.5px;line-height:30.5px;color:#dcdcdc;letter-spacing:-0.524px;-webkit-text-stroke:0.55px #333333;width:153.40px;overflow:hidden;">10.00%</div>
<div class="t" style="left:50.58px;top:702px;font-size:30.5px;line-height:30.5px;color:#dcdcdc;letter-spacing:0.584px;-webkit-text-stroke:0.55px #1e1e1e;width:153.40px;overflow:hidden;">10/20/2025</div>
<div class="t" style="left:235.36px;top:702px;font-size:30.5px;line-height:30.5px;color:#dcdcdc;letter-spacing:0.000px;-webkit-text-stroke:0.55px #1e1e1e;width:153.40px;overflow:hidden;">1</div>
<div class="t" style="left:420.73px;top:702px;font-size:30.5px;line-height:30.5px;color:#dcdcdc;letter-spacing:0.381px;-webkit-text-stroke:0.55px #1e1e1e;width:152.81px;overflow:hidden;">$3,565.00</div>
<div class="t" style="left:605.51px;top:702px;font-size:30.5px;line-height:30.5px;color:#dcdcdc;letter-spacing:0.012px;-webkit-text-stroke:0.55px #1e1e1e;width:152.81px;overflow:hidden;">$1,945.00</div>
<div class="t" style="left:790.29px;top:702px;font-size:30.5px;line-height:30.5px;color:#dcdcdc;letter-spacing:0.012px;-webkit-text-stroke:0.55px #1e1e1e;width:152.81px;overflow:hidden;">$1,945.00</div>
<div class="t" style="left:975.07px;top:702px;font-size:30.5px;line-height:30.5px;color:#dcdcdc;letter-spacing:1.705px;-webkit-text-stroke:0.55px #1e1e1e;width:152.81px;overflow:hidden;">$0.00</div>
<div class="t" style="left:1159.85px;top:702px;font-size:30.5px;line-height:30.5px;color:#dcdcdc;letter-spacing:1.705px;-webkit-text-stroke:0.55px #1e1e1e;width:152.81px;overflow:hidden;">$0.00</div>
<div class="t" style="left:1344.63px;top:702px;font-size:30.5px;line-height:30.5px;color:#dcdcdc;letter-spacing:1.705px;-webkit-text-stroke:0.55px #1e1e1e;width:152.81px;overflow:hidden;">$0.00</div>
<div class="t" style="left:1529.41px;top:702px;font-size:30.5px;line-height:30.5px;color:#dcdcdc;letter-spacing:1.705px;-webkit-text-stroke:0.55px #1e1e1e;width:152.81px;overflow:hidden;">$0.00</div>
<div class="t" style="left:1713.60px;top:702px;font-size:30.5px;line-height:30.5px;color:#dcdcdc;letter-spacing:-0.035px;-webkit-text-stroke:0.55px #1e1e1e;width:153.40px;overflow:hidden;">100.00%</div>
<div class="t" style="left:1898.97px;top:702px;font-size:30.5px;line-height:30.5px;color:#dcdcdc;letter-spacing:0.012px;-webkit-text-stroke:0.55px #1e1e1e;width:152.81px;overflow:hidden;">$1,945.00</div>
<div class="t" style="left:2083.75px;top:702px;font-size:30.5px;line-height:30.5px;color:#dcdcdc;letter-spacing:0.012px;-webkit-text-stroke:0.55px #1e1e1e;width:152.81px;overflow:hidden;">$1,945.00</div>
<div class="t" style="left:2268.53px;top:702px;font-size:30.5px;line-height:30.5px;color:#dcdcdc;letter-spacing:1.705px;-webkit-text-stroke:0.55px #1e1e1e;width:152.81px;overflow:hidden;">$0.00</div>
<div class="t" style="left:2453.31px;top:702px;font-size:30.5px;line-height:30.5px;color:#dcdcdc;letter-spacing:0.012px;-webkit-text-stroke:0.55px #1e1e1e;width:152.81px;overflow:hidden;">$1,945.00</div>
<div class="t" style="left:2638.09px;top:702px;font-size:30.5px;line-height:30.5px;color:#dcdcdc;letter-spacing:1.705px;-webkit-text-stroke:0.55px #1e1e1e;width:152.81px;overflow:hidden;">$0.00</div>
<div class="t" style="left:2822.60px;top:702px;font-size:30.5px;line-height:30.5px;color:#dcdcdc;letter-spacing:1.111px;-webkit-text-stroke:0.55px #1e1e1e;width:153.08px;overflow:hidden;">425.00</div>
<div class="t" style="left:3007.65px;top:702px;font-size:30.5px;line-height:30.5px;color:#dcdcdc;letter-spacing:1.088px;-webkit-text-stroke:0.55px #1e1e1e;width:152.81px;overflow:hidden;">$545.00</div>
<div class="t" style="left:3192.43px;top:702px;font-size:30.5px;line-height:30.5px;color:#dcdcdc;letter-spacing:0.923px;-webkit-text-stroke:0.55px #1e1e1e;width:152.81px;overflow:hidden;">$2,500.00</div>
<div class="t" style="left:3377.21px;top:702px;font-size:30.5px;line-height:30.5px;color:#dcdcdc;letter-spacing:0.619px;-webkit-text-stroke:0.55px #1e1e1e;width:152.81px;overflow:hidden;">$555.00</div>
<div class="t" style="left:3561.40px;top:702px;font-size:30.5px;line-height:30.5px;color:#dcdcdc;letter-spacing:-0.524px;-webkit-text-stroke:0.55px #1e1e1e;width:153.40px;overflow:hidden;">10.00%</div>
<div class="t" style="left:50.58px;top:754px;font-size:30.5px;line-height:30.5px;color:#dcdcdc;letter-spacing:-0.382px;-webkit-text-stroke:0.55px #1e1e1e;width:153.40px;overflow:hidden;">10/21/2025</div>
<div class="t" style="left:235.36px;top:754px;font-size:30.5px;line-height:30.5px;color:#dcdcdc;letter-spacing:0.000px;-webkit-text-stroke:0.55px #1e1e1e;width:153.40px;overflow:hidden;">1</div>
<div class="t" style="left:420.73px;top:754px;font-size:30.5px;line-height:30.5px;color:#dcdcdc;letter-spacing:0.973px;-webkit-text-stroke:0.55px #1e1e1e;width:152.81px;overflow:hidden;">$4,370.00</div>
<div class="t" style="left:605.51px;top:754px;font-size:30.5px;line-height:30.5px;color:#dcdcdc;letter-spacing:1.385px;-webkit-text-stroke:0.55px #1e1e1e;width:152.81px;overflow:hidden;">$805.00</div>
<div class="t" style="left:790.29px;top:754px;font-size:30.5px;line-height:30.5px;color:#dcdcdc;letter-spacing:1.385px;-webkit-text-stroke:0.55px #1e1e1e;width:152.81px;overflow:hidden;">$805.00</div>
<div class="t" style="left:975.07px;top:754px;font-size:30.5px;line-height:30.5px;color:#dcdcdc;letter-spacing:1.705px;-webkit-text-stroke:0.55px #1e1e1e;width:152.81px;overflow:hidden;">$0.00</div>
<div class="t" style="left:1159.85px;top:754px;font-size:30.5px;line-height:30.5px;color:#dcdcdc;letter-spacing:1.705px;-webkit-text-stroke:0.55px #1e1e1e;width:152.81px;overflow:hidden;">$0.00</div>
<div class="t" style="left:1344.63px;top:754px;font-size:30.5px;line-height:30.5px;color:#dcdcdc;letter-spacing:1.705px;-webkit-text-stroke:0.55px #1e1e1e;width:152.81px;overflow:hidden;">$0.00</div>
<div class="t" style="left:1529.41px;top:754px;font-size:30.5px;line-height:30.5px;color:#dcdcdc;letter-spacing:1.705px;-webkit-text-stroke:0.55px #1e1e1e;width:152.81px;overflow:hidden;">$0.00</div>
<div class="t" style="left:1713.60px;top:754px;font-size:30.5px;line-height:30.5px;color:#dcdcdc;letter-spacing:-0.035px;-webkit-text-stroke:0.55px #1e1e1e;width:153.40px;overflow:hidden;">100.00%</div>
<div class="t" style="left:1898.97px;top:754px;font-size:30.5px;line-height:30.5px;color:#dcdcdc;letter-spacing:1.385px;-webkit-text-stroke:0.55px #1e1e1e;width:152.81px;overflow:hidden;">$805.00</div>
<div class="t" style="left:2083.75px;top:754px;font-size:30.5px;line-height:30.5px;color:#dcdcdc;letter-spacing:1.385px;-webkit-text-stroke:0.55px #1e1e1e;width:152.81px;overflow:hidden;">$805.00</div>
<div class="t" style="left:2268.53px;top:754px;font-size:30.5px;line-height:30.5px;color:#dcdcdc;letter-spacing:1.705px;-webkit-text-stroke:0.55px #1e1e1e;width:152.81px;overflow:hidden;">$0.00</div>
<div class="t" style="left:2453.31px;top:754px;font-size:30.5px;line-height:30.5px;color:#dcdcdc;letter-spacing:1.385px;-webkit-text-stroke:0.55px #1e1e1e;width:152.81px;overflow:hidden;">$805.00</div>
<div class="t" style="left:2638.09px;top:754px;font-size:30.5px;line-height:30.5px;color:#dcdcdc;letter-spacing:1.705px;-webkit-text-stroke:0.55px #1e1e1e;width:152.81px;overflow:hidden;">$0.00</div>
<div class="t" style="left:2822.17px;top:754px;font-size:30.5px;line-height:30.5px;color:#dcdcdc;letter-spacing:1.068px;-webkit-text-stroke:0.55px #1e1e1e;width:153.51px;overflow:hidden;">2.00</div>
<div class="t" style="left:3007.65px;top:754px;font-size:30.5px;line-height:30.5px;color:#dcdcdc;letter-spacing:-0.422px;-webkit-text-stroke:0.55px #1e1e1e;width:152.81px;overflow:hidden;">$15.00</div>
<div class="t" style="left:3192.43px;top:754px;font-size:30.5px;line-height:30.5px;color:#dcdcdc;letter-spacing:1.385px;-webkit-text-stroke:0.55px #1e1e1e;width:152.81px;overflow:hidden;">$805.00</div>
<div class="t" style="left:3377.21px;top:754px;font-size:30.5px;line-height:30.5px;color:#dcdcdc;letter-spacing:1.705px;-webkit-text-stroke:0.55px #1e1e1e;width:152.81px;overflow:hidden;">$0.00</div>
<div class="t" style="left:3561.40px;top:754px;font-size:30.5px;line-height:30.5px;color:#dcdcdc;letter-spacing:-0.524px;-webkit-text-stroke:0.55px #1e1e1e;width:153.40px;overflow:hidden;">10.00%</div>
<div class="t" style="left:50.58px;top:806px;font-size:30.5px;line-height:30.5px;color:#dcdcdc;letter-spacing:0.294px;-webkit-text-stroke:0.55px #1e1e1e;width:153.40px;overflow:hidden;">10/22/2025</div>
<div class="t" style="left:235.36px;top:806px;font-size:30.5px;line-height:30.5px;color:#dcdcdc;letter-spacing:0.000px;-webkit-text-stroke:0.55px #1e1e1e;width:153.40px;overflow:hidden;">1</div>
<div class="t" style="left:420.73px;top:806px;font-size:30.5px;line-height:30.5px;color:#dcdcdc;letter-spacing:0.747px;-webkit-text-stroke:0.55px #1e1e1e;width:152.81px;overflow:hidden;">$5,885.00</div>
<div class="t" style="left:605.51px;top:806px;font-size:30.5px;line-height:30.5px;color:#dcdcdc;letter-spacing:-1.255px;-webkit-text-stroke:0.55px #1e1e1e;width:152.81px;overflow:hidden;">$1,515.00</div>
<div class="t" style="left:790.29px;top:806px;font-size:30.5px;line-height:30.5px;color:#dcdcdc;letter-spacing:-1.255px;-webkit-text-stroke:0.55px #1e1e1e;width:152.81px;overflow:hidden;">$1,515.00</div>
<div class="t" style="left:975.07px;top:806px;font-size:30.5px;line-height:30.5px;color:#dcdcdc;letter-spacing:1.705px;-webkit-text-stroke:0.55px #1e1e1e;width:152.81px;overflow:hidden;">$0.00</div>
<div class="t" style="left:1159.85px;top:806px;font-size:30.5px;line-height:30.5px;color:#dcdcdc;letter-spacing:1.705px;-webkit-text-stroke:0.55px #1e1e1e;width:152.81px;overflow:hidden;">$0.00</div>
<div class="t" style="left:1344.63px;top:806px;font-size:30.5px;line-height:30.5px;color:#dcdcdc;letter-spacing:1.705px;-webkit-text-stroke:0.55px #1e1e1e;width:152.81px;overflow:hidden;">$0.00</div>
<div class="t" style="left:1529.41px;top:806px;font-size:30.5px;line-height:30.5px;color:#dcdcdc;letter-spacing:1.705px;-webkit-text-stroke:0.55px #1e1e1e;width:152.81px;overflow:hidden;">$0.00</div>
<div class="t" style="left:1713.60px;top:806px;font-size:30.5px;line-height:30.5px;color:#dcdcdc;letter-spacing:-0.035px;-webkit-text-stroke:0.55px #1e1e1e;width:153.40px;overflow:hidden;">100.00%</div>
<div class="t" style="left:1898.97px;top:806px;font-size:30.5px;line-height:30.5px;color:#dcdcdc;letter-spacing:-1.255px;-webkit-text-stroke:0.55px #1e1e1e;width:152.81px;overflow:hidden;">$1,515.00</div>
<div class="t" style="left:2083.75px;top:806px;font-size:30.5px;line-height:30.5px;color:#dcdcdc;letter-spacing:-1.255px;-webkit-text-stroke:0.55px #1e1e1e;width:152.81px;overflow:hidden;">$1,515.00</div>
<div class="t" style="left:2268.53px;top:806px;font-size:30.5px;line-height:30.5px;color:#dcdcdc;letter-spacing:1.705px;-webkit-text-stroke:0.55px #1e1e1e;width:152.81px;overflow:hidden;">$0.00</div>
<div class="t" style="left:2453.31px;top:806px;font-size:30.5px;line-height:30.5px;color:#dcdcdc;letter-spacing:-1.255px;-webkit-text-stroke:0.55px #1e1e1e;width:152.81px;overflow:hidden;">$1,515.00</div>
<div class="t" style="left:2638.09px;top:806px;font-size:30.5px;line-height:30.5px;color:#dcdcdc;letter-spacing:1.705px;-webkit-text-stroke:0.55px #1e1e1e;width:152.81px;overflow:hidden;">$0.00</div>
<div class="t" style="left:2822.28px;top:806px;font-size:30.5px;line-height:30.5px;color:#dcdcdc;letter-spacing:-1.726px;-webkit-text-stroke:0.55px #1e1e1e;width:153.40px;overflow:hidden;">11.00</div>
<div class="t" style="left:3007.65px;top:806px;font-size:30.5px;line-height:30.5px;color:#dcdcdc;letter-spacing:1.705px;-webkit-text-stroke:0.55px #1e1e1e;width:152.81px;overflow:hidden;">$0.00</div>
<div class="t" style="left:3192.43px;top:806px;font-size:30.5px;line-height:30.5px;color:#dcdcdc;letter-spacing:-1.255px;-webkit-text-stroke:0.55px #1e1e1e;width:152.81px;overflow:hidden;">$1,515.00</div>
<div class="t" style="left:3377.21px;top:806px;font-size:30.5px;line-height:30.5px;color:#dcdcdc;letter-spacing:1.705px;-webkit-text-stroke:0.55px #1e1e1e;width:152.81px;overflow:hidden;">$0.00</div>
<div class="t" style="left:3561.40px;top:806px;font-size:30.5px;line-height:30.5px;color:#dcdcdc;letter-spacing:-0.524px;-webkit-text-stroke:0.55px #1e1e1e;width:153.40px;overflow:hidden;">10.00%</div>
<div class="t" style="left:50.58px;top:858px;font-size:30.5px;line-height:30.5px;color:#dcdcdc;letter-spacing:0.319px;-webkit-text-stroke:0.55px #1e1e1e;width:153.40px;overflow:hidden;">10/27/2025</div>
<div class="t" style="left:235.36px;top:858px;font-size:30.5px;line-height:30.5px;color:#dcdcdc;letter-spacing:0.000px;-webkit-text-stroke:0.55px #1e1e1e;width:153.40px;overflow:hidden;">1</div>
<div class="t" style="left:420.73px;top:858px;font-size:30.5px;line-height:30.5px;color:#dcdcdc;letter-spacing:1.099px;-webkit-text-stroke:0.55px #1e1e1e;width:152.81px;overflow:hidden;">$8,485.00</div>
<div class="t" style="left:605.51px;top:858px;font-size:30.5px;line-height:30.5px;color:#dcdcdc;letter-spacing:1.045px;-webkit-text-stroke:0.55px #1e1e1e;width:152.81px;overflow:hidden;">$2,600.00</div>
<div class="t" style="left:790.29px;top:858px;font-size:30.5px;line-height:30.5px;color:#dcdcdc;letter-spacing:1.045px;-webkit-text-stroke:0.55px #1e1e1e;width:152.81px;overflow:hidden;">$2,600.00</div>
<div class="t" style="left:975.07px;top:858px;font-size:30.5px;line-height:30.5px;color:#dcdcdc;letter-spacing:1.705px;-webkit-text-stroke:0.55px #1e1e1e;width:152.81px;overflow:hidden;">$0.00</div>
<div class="t" style="left:1159.85px;top:858px;font-size:30.5px;line-height:30.5px;color:#dcdcdc;letter-spacing:1.705px;-webkit-text-stroke:0.55px #1e1e1e;width:152.81px;overflow:hidden;">$0.00</div>
<div class="t" style="left:1344.63px;top:858px;font-size:30.5px;line-height:30.5px;color:#dcdcdc;letter-spacing:1.705px;-webkit-text-stroke:0.55px #1e1e1e;width:152.81px;overflow:hidden;">$0.00</div>
<div class="t" style="left:1529.41px;top:858px;font-size:30.5px;line-height:30.5px;color:#dcdcdc;letter-spacing:1.705px;-webkit-text-stroke:0.55px #1e1e1e;width:152.81px;overflow:hidden;">$0.00</div>
<div class="t" style="left:1713.60px;top:858px;font-size:30.5px;line-height:30.5px;color:#dcdcdc;letter-spacing:-0.035px;-webkit-text-stroke:0.55px #1e1e1e;width:153.40px;overflow:hidden;">100.00%</div>
<div class="t" style="left:1898.97px;top:858px;font-size:30.5px;line-height:30.5px;color:#dcdcdc;letter-spacing:1.045px;-webkit-text-stroke:0.55px #1e1e1e;width:152.81px;overflow:hidden;">$2,600.00</div>
<div class="t" style="left:2083.75px;top:858px;font-size:30.5px;line-height:30.5px;color:#dcdcdc;letter-spacing:1.045px;-webkit-text-stroke:0.55px #1e1e1e;width:152.81px;overflow:hidden;">$2,600.00</div>
<div class="t" style="left:2268.53px;top:858px;font-size:30.5px;line-height:30.5px;color:#dcdcdc;letter-spacing:1.705px;-webkit-text-stroke:0.55px #1e1e1e;width:152.81px;overflow:hidden;">$0.00</div>
<div class="t" style="left:2453.31px;top:858px;font-size:30.5px;line-height:30.5px;color:#dcdcdc;letter-spacing:1.045px;-webkit-text-stroke:0.55px #1e1e1e;width:152.81px;overflow:hidden;">$2,600.00</div>
<div class="t" style="left:2638.09px;top:858px;font-size:30.5px;line-height:30.5px;color:#dcdcdc;letter-spacing:1.705px;-webkit-text-stroke:0.55px #1e1e1e;width:152.81px;overflow:hidden;">$0.00</div>
<div class="t" style="left:2822.34px;top:858px;font-size:30.5px;line-height:30.5px;color:#dcdcdc;letter-spacing:-0.617px;-webkit-text-stroke:0.55px #1e1e1e;width:153.34px;overflow:hidden;">371.00</div>
<div class="t" style="left:3007.65px;top:858px;font-size:30.5px;line-height:30.5px;color:#dcdcdc;letter-spacing:1.251px;-webkit-text-stroke:0.55px #1e1e1e;width:152.81px;overflow:hidden;">$465.00</div>
<div class="t" style="left:3192.43px;top:858px;font-size:30.5px;line-height:30.5px;color:#dcdcdc;letter-spacing:1.045px;-webkit-text-stroke:0.55px #1e1e1e;width:152.81px;overflow:hidden;">$2,600.00</div>
<div class="t" style="left:3377.21px;top:858px;font-size:30.5px;line-height:30.5px;color:#dcdcdc;letter-spacing:1.705px;-webkit-text-stroke:0.55px #1e1e1e;width:152.81px;overflow:hidden;">$0.00</div>
<div class="t" style="left:3561.40px;top:858px;font-size:30.5px;line-height:30.5px;color:#dcdcdc;letter-spacing:-0.524px;-webkit-text-stroke:0.55px #1e1e1e;width:153.40px;overflow:hidden;">10.00%</div>
<div class="t" style="left:50.58px;top:910px;font-size:30.5px;line-height:30.5px;color:#dcdcdc;letter-spacing:0.508px;-webkit-text-stroke:0.55px #1e1e1e;width:153.40px;overflow:hidden;">10/28/2025</div>
<div class="t" style="left:235.36px;top:910px;font-size:30.5px;line-height:30.5px;color:#dcdcdc;letter-spacing:0.000px;-webkit-text-stroke:0.55px #1e1e1e;width:153.40px;overflow:hidden;">1</div>
<div class="t" style="left:420.73px;top:910px;font-size:30.5px;line-height:30.5px;color:#dcdcdc;letter-spacing:0.654px;-webkit-text-stroke:0.55px #1e1e1e;width:152.81px;overflow:hidden;">$7,570.00</div>
<div class="t" style="left:605.45px;top:910px;font-size:30.5px;line-height:30.5px;color:#f40a0a;letter-spacing:-0.198px;-webkit-text-stroke:0.55px #1e1e1e;width:152.87px;overflow:hidden;">($915.00)</div>
<div class="t" style="left:790.29px;top:910px;font-size:30.5px;line-height:30.5px;color:#dcdcdc;letter-spacing:1.705px;-webkit-text-stroke:0.55px #1e1e1e;width:152.81px;overflow:hidden;">$0.00</div>
<div class="t" style="left:975.01px;top:910px;font-size:30.5px;line-height:30.5px;color:#f40a0a;letter-spacing:-0.198px;-webkit-text-stroke:0.55px #1e1e1e;width:152.87px;overflow:hidden;">($915.00)</div>
<div class="t" style="left:1159.85px;top:910px;font-size:30.5px;line-height:30.5px;color:#dcdcdc;letter-spacing:1.705px;-webkit-text-stroke:0.55px #1e1e1e;width:152.81px;overflow:hidden;">$0.00</div>
<div class="t" style="left:1344.57px;top:910px;font-size:30.5px;line-height:30.5px;color:#f40a0a;letter-spacing:-0.198px;-webkit-text-stroke:0.55px #1e1e1e;width:152.87px;overflow:hidden;">($915.00)</div>
<div class="t" style="left:1529.35px;top:910px;font-size:30.5px;line-height:30.5px;color:#f40a0a;letter-spacing:-0.198px;-webkit-text-stroke:0.55px #1e1e1e;width:152.87px;overflow:hidden;">($915.00)</div>
<div class="t" style="left:1714.23px;top:910px;font-size:30.5px;line-height:30.5px;color:#dcdcdc;letter-spacing:0.916px;-webkit-text-stroke:0.55px #1e1e1e;width:152.77px;overflow:hidden;">0.00%</div>
<div class="t" style="left:1898.91px;top:910px;font-size:30.5px;line-height:30.5px;color:#f40a0a;letter-spacing:-0.198px;-webkit-text-stroke:0.55px #1e1e1e;width:152.87px;overflow:hidden;">($915.00)</div>
<div class="t" style="left:2083.75px;top:910px;font-size:30.5px;line-height:30.5px;color:#dcdcdc;letter-spacing:1.705px;-webkit-text-stroke:0.55px #1e1e1e;width:152.81px;overflow:hidden;">$0.00</div>
<div class="t" style="left:2268.47px;top:910px;font-size:30.5px;line-height:30.5px;color:#f40a0a;letter-spacing:-0.198px;-webkit-text-stroke:0.55px #1e1e1e;width:152.87px;overflow:hidden;">($915.00)</div>
<div class="t" style="left:2453.31px;top:910px;font-size:30.5px;line-height:30.5px;color:#dcdcdc;letter-spacing:1.705px;-webkit-text-stroke:0.55px #1e1e1e;width:152.81px;overflow:hidden;">$0.00</div>
<div class="t" style="left:2638.03px;top:910px;font-size:30.5px;line-height:30.5px;color:#f40a0a;letter-spacing:-0.198px;-webkit-text-stroke:0.55px #1e1e1e;width:152.87px;overflow:hidden;">($915.00)</div>
<div class="t" style="left:2822.34px;top:910px;font-size:30.5px;line-height:30.5px;color:#dcdcdc;letter-spacing:1.058px;-webkit-text-stroke:0.55px #1e1e1e;width:153.34px;overflow:hidden;">3.00</div>
<div class="t" style="left:3007.65px;top:910px;font-size:30.5px;line-height:30.5px;color:#dcdcdc;letter-spacing:-0.179px;-webkit-text-stroke:0.55px #1e1e1e;width:152.81px;overflow:hidden;">$915.00</div>
<div class="t" style="left:3192.43px;top:910px;font-size:30.5px;line-height:30.5px;color:#dcdcdc;letter-spacing:0.050px;-webkit-text-stroke:0.55px #1e1e1e;width:152.81px;overflow:hidden;">$130.00</div>
<div class="t" style="left:3377.21px;top:910px;font-size:30.5px;line-height:30.5px;color:#dcdcdc;letter-spacing:0.184px;-webkit-text-stroke:0.55px #1e1e1e;width:152.81px;overflow:hidden;">$1,045.00</div>
<div class="t" style="left:3561.40px;top:910px;font-size:30.5px;line-height:30.5px;color:#dcdcdc;letter-spacing:-0.524px;-webkit-text-stroke:0.55px #1e1e1e;width:153.40px;overflow:hidden;">10.00%</div>
<div class="t" style="left:50.58px;top:962px;font-size:30.5px;line-height:30.5px;color:#dcdcdc;letter-spacing:0.431px;-webkit-text-stroke:0.55px #1e1e1e;width:153.40px;overflow:hidden;">10/29/2025</div>
<div class="t" style="left:235.36px;top:962px;font-size:30.5px;line-height:30.5px;color:#dcdcdc;letter-spacing:0.000px;-webkit-text-stroke:0.55px #1e1e1e;width:153.40px;overflow:hidden;">1</div>
<div class="t" style="left:420.73px;top:962px;font-size:30.5px;line-height:30.5px;color:#dcdcdc;letter-spacing:0.621px;-webkit-text-stroke:0.55px #1e1e1e;width:152.81px;overflow:hidden;">$7,055.00</div>
<div class="t" style="left:605.45px;top:962px;font-size:30.5px;line-height:30.5px;color:#f40a0a;letter-spacing:-0.356px;-webkit-text-stroke:0.55px #1e1e1e;width:152.87px;overflow:hidden;">($515.00)</div>
<div class="t" style="left:790.29px;top:962px;font-size:30.5px;line-height:30.5px;color:#dcdcdc;letter-spacing:1.705px;-webkit-text-stroke:0.55px #1e1e1e;width:152.81px;overflow:hidden;">$0.00</div>
<div class="t" style="left:975.01px;top:962px;font-size:30.5px;line-height:30.5px;color:#f40a0a;letter-spacing:-0.356px;-webkit-text-stroke:0.55px #1e1e1e;width:152.87px;overflow:hidden;">($515.00)</div>
<div class="t" style="left:1159.85px;top:962px;font-size:30.5px;line-height:30.5px;color:#dcdcdc;letter-spacing:1.705px;-webkit-text-stroke:0.55px #1e1e1e;width:152.81px;overflow:hidden;">$0.00</div>
<div class="t" style="left:1344.57px;top:962px;font-size:30.5px;line-height:30.5px;color:#f40a0a;letter-spacing:0.096px;-webkit-text-stroke:0.55px #1e1e1e;width:152.87px;overflow:hidden;">($1,430.00)</div>
<div class="t" style="left:1529.35px;top:962px;font-size:30.5px;line-height:30.5px;color:#f40a0a;letter-spacing:-0.356px;-webkit-text-stroke:0.55px #1e1e1e;width:152.87px;overflow:hidden;">($515.00)</div>
<div class="t" style="left:1714.23px;top:962px;font-size:30.5px;line-height:30.5px;color:#dcdcdc;letter-spacing:0.916px;-webkit-text-stroke:0.55px #1e1e1e;width:152.77px;overflow:hidden;">0.00%</div>
<div class="t" style="left:1898.91px;top:962px;font-size:30.5px;line-height:30.5px;color:#f40a0a;letter-spacing:-0.356px;-webkit-text-stroke:0.55px #1e1e1e;width:152.87px;overflow:hidden;">($515.00)</div>
<div class="t" style="left:2083.75px;top:962px;font-size:30.5px;line-height:30.5px;color:#dcdcdc;letter-spacing:1.705px;-webkit-text-stroke:0.55px #1e1e1e;width:152.81px;overflow:hidden;">$0.00</div>
<div class="t" style="left:2268.47px;top:962px;font-size:30.5px;line-height:30.5px;color:#f40a0a;letter-spacing:-0.356px;-webkit-text-stroke:0.55px #1e1e1e;width:152.87px;overflow:hidden;">($515.00)</div>
<div class="t" style="left:2453.31px;top:962px;font-size:30.5px;line-height:30.5px;color:#dcdcdc;letter-spacing:1.705px;-webkit-text-stroke:0.55px #1e1e1e;width:152.81px;overflow:hidden;">$0.00</div>
<div class="t" style="left:2638.03px;top:962px;font-size:30.5px;line-height:30.5px;color:#f40a0a;letter-spacing:-0.356px;-webkit-text-stroke:0.55px #1e1e1e;width:152.87px;overflow:hidden;">($515.00)</div>
<div class="t" style="left:2822.34px;top:962px;font-size:30.5px;line-height:30.5px;color:#dcdcdc;letter-spacing:0.743px;-webkit-text-stroke:0.55px #1e1e1e;width:153.34px;overflow:hidden;">32.00</div>
<div class="t" style="left:3007.65px;top:962px;font-size:30.5px;line-height:30.5px;color:#dcdcdc;letter-spacing:-0.390px;-webkit-text-stroke:0.55px #1e1e1e;width:152.81px;overflow:hidden;">$515.00</div>
<div class="t" style="left:3192.43px;top:962px;font-size:30.5px;line-height:30.5px;color:#dcdcdc;letter-spacing:1.227px;-webkit-text-stroke:0.55px #1e1e1e;width:152.81px;overflow:hidden;">$260.00</div>
<div class="t" style="left:3377.21px;top:962px;font-size:30.5px;line-height:30.5px;color:#dcdcdc;letter-spacing:0.706px;-webkit-text-stroke:0.55px #1e1e1e;width:152.81px;overflow:hidden;">$775.00</div>
<div class="t" style="left:3561.40px;top:962px;font-size:30.5px;line-height:30.5px;color:#dcdcdc;letter-spacing:-0.524px;-webkit-text-stroke:0.55px #1e1e1e;width:153.40px;overflow:hidden;">10.00%</div>
<div style="left:34px;top:1033px;width:3698px;height:84px;background:#3f3f46;"></div>
<div style="left:36px;top:1035px;width:3694px;height:80px;background:#676767;"></div>
<div class="t" style="left:51.17px;top:1061px;font-size:30.5px;line-height:30.5px;color:#dadada;letter-spacing:2.286px;-webkit-text-stroke:0.55px #676767;">Graph</div>
<div style="left:159px;top:1050px;width:393px;height:52px;background:#3f3f46;"></div>
<div class="t" style="left:174.65px;top:1062px;font-size:30.5px;line-height:30.5px;color:#dedede;letter-spacing:1.981px;-webkit-text-stroke:0.55px #3f3f46;">Cumulative Net Profit</div>
<svg style="left:517.9px;top:1066.7px" width="25" height="19" viewBox="0 0 25 19"><polygon points="0,3.6 3.7,0.7 12.2,10.2 20.6,0.7 24.3,3.6 12.2,18.4" fill="#d0d0d0"/></svg>
<div style="left:34px;top:1115px;width:2px;height:871px;background:#3f3f46;"></div>
<div style="left:3730px;top:1115px;width:2px;height:871px;background:#3f3f46;"></div>
<div style="left:34px;top:1984px;width:3698px;height:2px;background:#3f3f46;"></div>
<svg style="left:0;top:1100px" width="3840" height="900" viewBox="0 1100 3840 900"><rect x="252" y="1128.8" width="11.7" height="758.7" fill="#303030"/><rect x="577.7" y="1128.8" width="314.0" height="758.7" fill="#303030"/><rect x="1205.7" y="1128.8" width="314.0" height="758.7" fill="#303030"/><rect x="1833.7" y="1128.8" width="314.0" height="758.7" fill="#303030"/><rect x="2461.7" y="1128.8" width="314.0" height="758.7" fill="#303030"/><rect x="3089.7" y="1128.8" width="314.0" height="758.7" fill="#303030"/><line x1="252" y1="1824.7" x2="3717.7" y2="1824.7" stroke="#8b8b8d" stroke-width="2.35" stroke-dasharray="12.8 4.845" stroke-dashoffset="2.7"/><line x1="252" y1="1771.8" x2="3717.7" y2="1771.8" stroke="#8b8b8d" stroke-width="2.35" stroke-dasharray="12.8 4.845" stroke-dashoffset="2.7"/><line x1="252" y1="1718.9" x2="3717.7" y2="1718.9" stroke="#8b8b8d" stroke-width="2.35" stroke-dasharray="12.8 4.845" stroke-dashoffset="2.7"/><line x1="252" y1="1666.0" x2="3717.7" y2="1666.0" stroke="#8b8b8d" stroke-width="2.35" stroke-dasharray="12.8 4.845" stroke-dashoffset="2.7"/><line x1="252" y1="1613.1" x2="3717.7" y2="1613.1" stroke="#8b8b8d" stroke-width="2.35" stroke-dasharray="12.8 4.845" stroke-dashoffset="2.7"/><line x1="252" y1="1560.2" x2="3717.7" y2="1560.2" stroke="#8b8b8d" stroke-width="2.35" stroke-dasharray="12.8 4.845" stroke-dashoffset="2.7"/><line x1="252" y1="1507.3" x2="3717.7" y2="1507.3" stroke="#8b8b8d" stroke-width="2.35" stroke-dasharray="12.8 4.845" stroke-dashoffset="2.7"/><line x1="252" y1="1454.4" x2="3717.7" y2="1454.4" stroke="#8b8b8d" stroke-width="2.35" stroke-dasharray="12.8 4.845" stroke-dashoffset="2.7"/><line x1="252" y1="1401.5" x2="3717.7" y2="1401.5" stroke="#8b8b8d" stroke-width="2.35" stroke-dasharray="12.8 4.845" stroke-dashoffset="2.7"/><line x1="252" y1="1348.6" x2="3717.7" y2="1348.6" stroke="#8b8b8d" stroke-width="2.35" stroke-dasharray="12.8 4.845" stroke-dashoffset="2.7"/><line x1="252" y1="1295.7" x2="3717.7" y2="1295.7" stroke="#8b8b8d" stroke-width="2.35" stroke-dasharray="12.8 4.845" stroke-dashoffset="2.7"/><line x1="252" y1="1242.8" x2="3717.7" y2="1242.8" stroke="#8b8b8d" stroke-width="2.35" stroke-dasharray="12.8 4.845" stroke-dashoffset="2.7"/><line x1="252" y1="1189.9" x2="3717.7" y2="1189.9" stroke="#8b8b8d" stroke-width="2.35" stroke-dasharray="12.8 4.845" stroke-dashoffset="2.7"/><line x1="252" y1="1137.0" x2="3717.7" y2="1137.0" stroke="#8b8b8d" stroke-width="2.35" stroke-dasharray="12.8 4.845" stroke-dashoffset="2.7"/><line x1="263.7" y1="1128.8" x2="263.7" y2="1877.6" stroke="#8b8b8d" stroke-width="2.45" stroke-dasharray="12.7 4.75"/><line x1="577.7" y1="1128.8" x2="577.7" y2="1877.6" stroke="#8b8b8d" stroke-width="2.45" stroke-dasharray="12.7 4.75"/><line x1="891.7" y1="1128.8" x2="891.7" y2="1877.6" stroke="#8b8b8d" stroke-width="2.45" stroke-dasharray="12.7 4.75"/><line x1="1205.7" y1="1128.8" x2="1205.7" y2="1877.6" stroke="#8b8b8d" stroke-width="2.45" stroke-dasharray="12.7 4.75"/><line x1="1519.7" y1="1128.8" x2="1519.7" y2="1877.6" stroke="#8b8b8d" stroke-width="2.45" stroke-dasharray="12.7 4.75"/><line x1="1833.7" y1="1128.8" x2="1833.7" y2="1877.6" stroke="#8b8b8d" stroke-width="2.45" stroke-dasharray="12.7 4.75"/><line x1="2147.7" y1="1128.8" x2="2147.7" y2="1877.6" stroke="#8b8b8d" stroke-width="2.45" stroke-dasharray="12.7 4.75"/><line x1="2461.7" y1="1128.8" x2="2461.7" y2="1877.6" stroke="#8b8b8d" stroke-width="2.45" stroke-dasharray="12.7 4.75"/><line x1="2775.7" y1="1128.8" x2="2775.7" y2="1877.6" stroke="#8b8b8d" stroke-width="2.45" stroke-dasharray="12.7 4.75"/><line x1="3089.7" y1="1128.8" x2="3089.7" y2="1877.6" stroke="#8b8b8d" stroke-width="2.45" stroke-dasharray="12.7 4.75"/><line x1="3403.7" y1="1128.8" x2="3403.7" y2="1877.6" stroke="#8b8b8d" stroke-width="2.45" stroke-dasharray="12.7 4.75"/><line x1="252" y1="1877.6" x2="262.2" y2="1877.6" stroke="#808082" stroke-width="2.2"/><polygon points="263.7,1877.6 263.7,1729.9 577.7,1614.0 734.7,1673.5 1833.7,1734.8 2304.7,1563.3 2461.7,1492.3 2618.7,1358.7 3403.7,1129.5 3560.7,1210.2 3717.7,1255.6 3717.7,1877.6" fill="rgba(91,216,30,0.52)"/><polyline points="263.7,1877.6 263.7,1729.9 577.7,1614.0 734.7,1673.5 1833.7,1734.8 2304.7,1563.3 2461.7,1492.3 2618.7,1358.7 3403.7,1129.5 3560.7,1210.2 3717.7,1255.6 3717.7,1877.6" fill="none" stroke="#5de11a" stroke-width="5.5" stroke-linejoin="round"/><line x1="264.2" y1="1878.0" x2="3720.2" y2="1878.0" stroke="#000" stroke-width="2.2"/><line x1="251" y1="1128.8" x2="251" y2="1890" stroke="#fff" stroke-width="2.1"/><line x1="250" y1="1888.6" x2="3718.2" y2="1888.6" stroke="#fff" stroke-width="2.7"/><line x1="243.2" y1="1877.6" x2="251" y2="1877.6" stroke="#fff" stroke-width="2.4"/><line x1="243.2" y1="1824.7" x2="251" y2="1824.7" stroke="#fff" stroke-width="2.4"/><line x1="243.2" y1="1771.8" x2="251" y2="1771.8" stroke="#fff" stroke-width="2.4"/><line x1="243.2" y1="1718.9" x2="251" y2="1718.9" stroke="#fff" stroke-width="2.4"/><line x1="243.2" y1="1666.0" x2="251" y2="1666.0" stroke="#fff" stroke-width="2.4"/><line x1="243.2" y1="1613.1" x2="251" y2="1613.1" stroke="#fff" stroke-width="2.4"/><line x1="243.2" y1="1560.2" x2="251" y2="1560.2" stroke="#fff" stroke-width="2.4"/><line x1="243.2" y1="1507.3" x2="251" y2="1507.3" stroke="#fff" stroke-width="2.4"/><line x1="243.2" y1="1454.4" x2="251" y2="1454.4" stroke="#fff" stroke-width="2.4"/><line x1="243.2" y1="1401.5" x2="251" y2="1401.5" stroke="#fff" stroke-width="2.4"/><line x1="243.2" y1="1348.6" x2="251" y2="1348.6" stroke="#fff" stroke-width="2.4"/><line x1="243.2" y1="1295.7" x2="251" y2="1295.7" stroke="#fff" stroke-width="2.4"/><line x1="243.2" y1="1242.8" x2="251" y2="1242.8" stroke="#fff" stroke-width="2.4"/><line x1="243.2" y1="1189.9" x2="251" y2="1189.9" stroke="#fff" stroke-width="2.4"/><line x1="243.2" y1="1137.0" x2="251" y2="1137.0" stroke="#fff" stroke-width="2.4"/><line x1="263.7" y1="1880" x2="263.7" y2="1887.4" stroke="#8a8a8a" stroke-width="2.6"/><line x1="263.7" y1="1888" x2="263.7" y2="1895.6" stroke="#fff" stroke-width="2.6"/><line x1="577.7" y1="1880" x2="577.7" y2="1887.4" stroke="#8a8a8a" stroke-width="2.6"/><line x1="577.7" y1="1888" x2="577.7" y2="1895.6" stroke="#fff" stroke-width="2.6"/><line x1="891.7" y1="1880" x2="891.7" y2="1887.4" stroke="#8a8a8a" stroke-width="2.6"/><line x1="891.7" y1="1888" x2="891.7" y2="1895.6" stroke="#fff" stroke-width="2.6"/><line x1="1205.7" y1="1880" x2="1205.7" y2="1887.4" stroke="#8a8a8a" stroke-width="2.6"/><line x1="1205.7" y1="1888" x2="1205.7" y2="1895.6" stroke="#fff" stroke-width="2.6"/><line x1="1519.7" y1="1880" x2="1519.7" y2="1887.4" stroke="#8a8a8a" stroke-width="2.6"/><line x1="1519.7" y1="1888" x2="1519.7" y2="1895.6" stroke="#fff" stroke-width="2.6"/><line x1="1833.7" y1="1880" x2="1833.7" y2="1887.4" stroke="#8a8a8a" stroke-width="2.6"/><line x1="1833.7" y1="1888" x2="1833.7" y2="1895.6" stroke="#fff" stroke-width="2.6"/><line x1="2147.7" y1="1880" x2="2147.7" y2="1887.4" stroke="#8a8a8a" stroke-width="2.6"/><line x1="2147.7" y1="1888" x2="2147.7" y2="1895.6" stroke="#fff" stroke-width="2.6"/><line x1="2461.7" y1="1880" x2="2461.7" y2="1887.4" stroke="#8a8a8a" stroke-width="2.6"/><line x1="2461.7" y1="1888" x2="2461.7" y2="1895.6" stroke="#fff" stroke-width="2.6"/><line x1="2775.7" y1="1880" x2="2775.7" y2="1887.4" stroke="#8a8a8a" stroke-width="2.6"/><line x1="2775.7" y1="1888" x2="2775.7" y2="1895.6" stroke="#fff" stroke-width="2.6"/><line x1="3089.7" y1="1880" x2="3089.7" y2="1887.4" stroke="#8a8a8a" stroke-width="2.6"/><line x1="3089.7" y1="1888" x2="3089.7" y2="1895.6" stroke="#fff" stroke-width="2.6"/><line x1="3403.7" y1="1880" x2="3403.7" y2="1887.4" stroke="#8a8a8a" stroke-width="2.6"/><line x1="3403.7" y1="1888" x2="3403.7" y2="1895.6" stroke="#fff" stroke-width="2.6"/><line x1="3716.7" y1="1888" x2="3716.7" y2="1895.6" stroke="#fff" stroke-width="2.6"/><circle cx="1833.7" cy="1734.8" r="11.8" fill="#3f5d2f" stroke="#3a3a40" stroke-width="3.2"/></svg>
<div class="t" style="left:153.05px;top:1863px;font-size:30.5px;line-height:30.5px;color:#fafafa;letter-spacing:1.705px;-webkit-text-stroke:0.15px #1e1e1e;">$0.00</div>
<div class="t" style="left:115.97px;top:1810px;font-size:30.5px;line-height:30.5px;color:#fafafa;letter-spacing:1.662px;-webkit-text-stroke:0.15px #1e1e1e;">$600.00</div>
<div class="t" style="left:99.18px;top:1757px;font-size:30.5px;line-height:30.5px;color:#fafafa;letter-spacing:0.166px;-webkit-text-stroke:0.15px #1e1e1e;">$1,200.00</div>
<div class="t" style="left:97.25px;top:1704px;font-size:30.5px;line-height:30.5px;color:#fafafa;letter-spacing:0.406px;-webkit-text-stroke:0.15px #1e1e1e;">$1,800.00</div>
<div class="t" style="left:90.31px;top:1651px;font-size:30.5px;line-height:30.5px;color:#fafafa;letter-spacing:1.274px;-webkit-text-stroke:0.15px #1e1e1e;">$2,400.00</div>
<div class="t" style="left:90.51px;top:1598px;font-size:30.5px;line-height:30.5px;color:#fafafa;letter-spacing:1.249px;-webkit-text-stroke:0.15px #1e1e1e;">$3,000.00</div>
<div class="t" style="left:92.17px;top:1545px;font-size:30.5px;line-height:30.5px;color:#fafafa;letter-spacing:1.041px;-webkit-text-stroke:0.15px #1e1e1e;">$3,600.00</div>
<div class="t" style="left:90.31px;top:1492px;font-size:30.5px;line-height:30.5px;color:#fafafa;letter-spacing:1.274px;-webkit-text-stroke:0.15px #1e1e1e;">$4,200.00</div>
<div class="t" style="left:88.39px;top:1439px;font-size:30.5px;line-height:30.5px;color:#fafafa;letter-spacing:1.515px;-webkit-text-stroke:0.15px #1e1e1e;">$4,800.00</div>
<div class="t" style="left:90.34px;top:1387px;font-size:30.5px;line-height:30.5px;color:#fafafa;letter-spacing:1.271px;-webkit-text-stroke:0.15px #1e1e1e;">$5,400.00</div>
<div class="t" style="left:89.53px;top:1334px;font-size:30.5px;line-height:30.5px;color:#fafafa;letter-spacing:1.371px;-webkit-text-stroke:0.15px #1e1e1e;">$6,000.00</div>
<div class="t" style="left:91.20px;top:1281px;font-size:30.5px;line-height:30.5px;color:#fafafa;letter-spacing:1.163px;-webkit-text-stroke:0.15px #1e1e1e;">$6,600.00</div>
<div class="t" style="left:92.86px;top:1228px;font-size:30.5px;line-height:30.5px;color:#fafafa;letter-spacing:0.955px;-webkit-text-stroke:0.15px #1e1e1e;">$7,200.00</div>
<div class="t" style="left:90.94px;top:1175px;font-size:30.5px;line-height:30.5px;color:#fafafa;letter-spacing:1.195px;-webkit-text-stroke:0.15px #1e1e1e;">$7,800.00</div>
<div class="t" style="left:88.39px;top:1122px;font-size:30.5px;line-height:30.5px;color:#fafafa;letter-spacing:1.515px;-webkit-text-stroke:0.15px #1e1e1e;">$8,400.00</div>
<div class="t" style="left:261.28px;top:1907px;font-size:30.5px;line-height:30.5px;color:#fafafa;letter-spacing:0.385px;-webkit-text-stroke:0.15px #1e1e1e;">10/7/2025</div>
<div class="t" style="left:498.38px;top:1907px;font-size:30.5px;line-height:30.5px;color:#fafafa;letter-spacing:0.510px;-webkit-text-stroke:0.15px #1e1e1e;">10/9/2025</div>
<div class="t" style="left:812.38px;top:1907px;font-size:30.5px;line-height:30.5px;color:#fafafa;letter-spacing:-0.807px;-webkit-text-stroke:0.15px #1e1e1e;">10/11/2025</div>
<div class="t" style="left:1126.38px;top:1907px;font-size:30.5px;line-height:30.5px;color:#fafafa;letter-spacing:-0.385px;-webkit-text-stroke:0.15px #1e1e1e;">10/13/2025</div>
<div class="t" style="left:1440.38px;top:1907px;font-size:30.5px;line-height:30.5px;color:#fafafa;letter-spacing:-0.385px;-webkit-text-stroke:0.15px #1e1e1e;">10/15/2025</div>
<div class="t" style="left:1754.38px;top:1907px;font-size:30.5px;line-height:30.5px;color:#fafafa;letter-spacing:-0.357px;-webkit-text-stroke:0.15px #1e1e1e;">10/17/2025</div>
<div class="t" style="left:2068.38px;top:1907px;font-size:30.5px;line-height:30.5px;color:#fafafa;letter-spacing:-0.245px;-webkit-text-stroke:0.15px #1e1e1e;">10/19/2025</div>
<div class="t" style="left:2382.38px;top:1907px;font-size:30.5px;line-height:30.5px;color:#fafafa;letter-spacing:-0.382px;-webkit-text-stroke:0.15px #1e1e1e;">10/21/2025</div>
<div class="t" style="left:2696.38px;top:1907px;font-size:30.5px;line-height:30.5px;color:#fafafa;letter-spacing:0.291px;-webkit-text-stroke:0.15px #1e1e1e;">10/23/2025</div>
<div class="t" style="left:3010.38px;top:1907px;font-size:30.5px;line-height:30.5px;color:#fafafa;letter-spacing:0.291px;-webkit-text-stroke:0.15px #1e1e1e;">10/25/2025</div>
<div class="t" style="left:3324.38px;top:1907px;font-size:30.5px;line-height:30.5px;color:#fafafa;letter-spacing:0.319px;-webkit-text-stroke:0.15px #1e1e1e;">10/27/2025</div>
<div class="t" style="left:3562.75px;top:1907px;font-size:30.5px;line-height:30.5px;color:#fafafa;letter-spacing:0.431px;-webkit-text-stroke:0.15px #1e1e1e;">10/29/2025</div>
<div class="t" style="left:1948.20px;top:1944px;font-size:30.5px;line-height:30.5px;color:#fafafa;letter-spacing:2.744px;-webkit-text-stroke:0.15px #1e1e1e;">Date</div>
<div class="t" style="left:62px;top:1510.5px;transform:translate(-50%,-50%) rotate(-90deg);font-size:30.5px;line-height:30.5px;color:#fafafa;letter-spacing:1.9px;-webkit-text-stroke:0.15px #1e1e1e;">Cumulative profit ($)</div>
<div style="left:67px;top:2001px;width:196px;height:66px;background:#0a8ef5;"></div>
<div style="left:69px;top:2001px;width:192px;height:64px;background:#1e1e1e;"></div>
<div class="t" style="left:82.57px;top:2015px;font-size:33.5px;line-height:33.5px;color:#0094ff;letter-spacing:1.814px;font-weight:bold;">Analyzer</div>
<div style="left:263px;top:2003px;width:58px;height:56px;background:#3f3f46;"></div>
<div style="left:278px;top:2026.5px;width:26px;height:6px;background:#d0d0d0;"></div>
<div style="left:288px;top:2017px;width:6px;height:25px;background:#d0d0d0;"></div>
<div style="left:3838px;top:2px;width:2px;height:2080px;background:#2d2d30;"></div>
<div style="left:3837px;top:58px;width:1px;height:2024px;background:rgba(118,134,168,0.6);"></div>
</body></html>
